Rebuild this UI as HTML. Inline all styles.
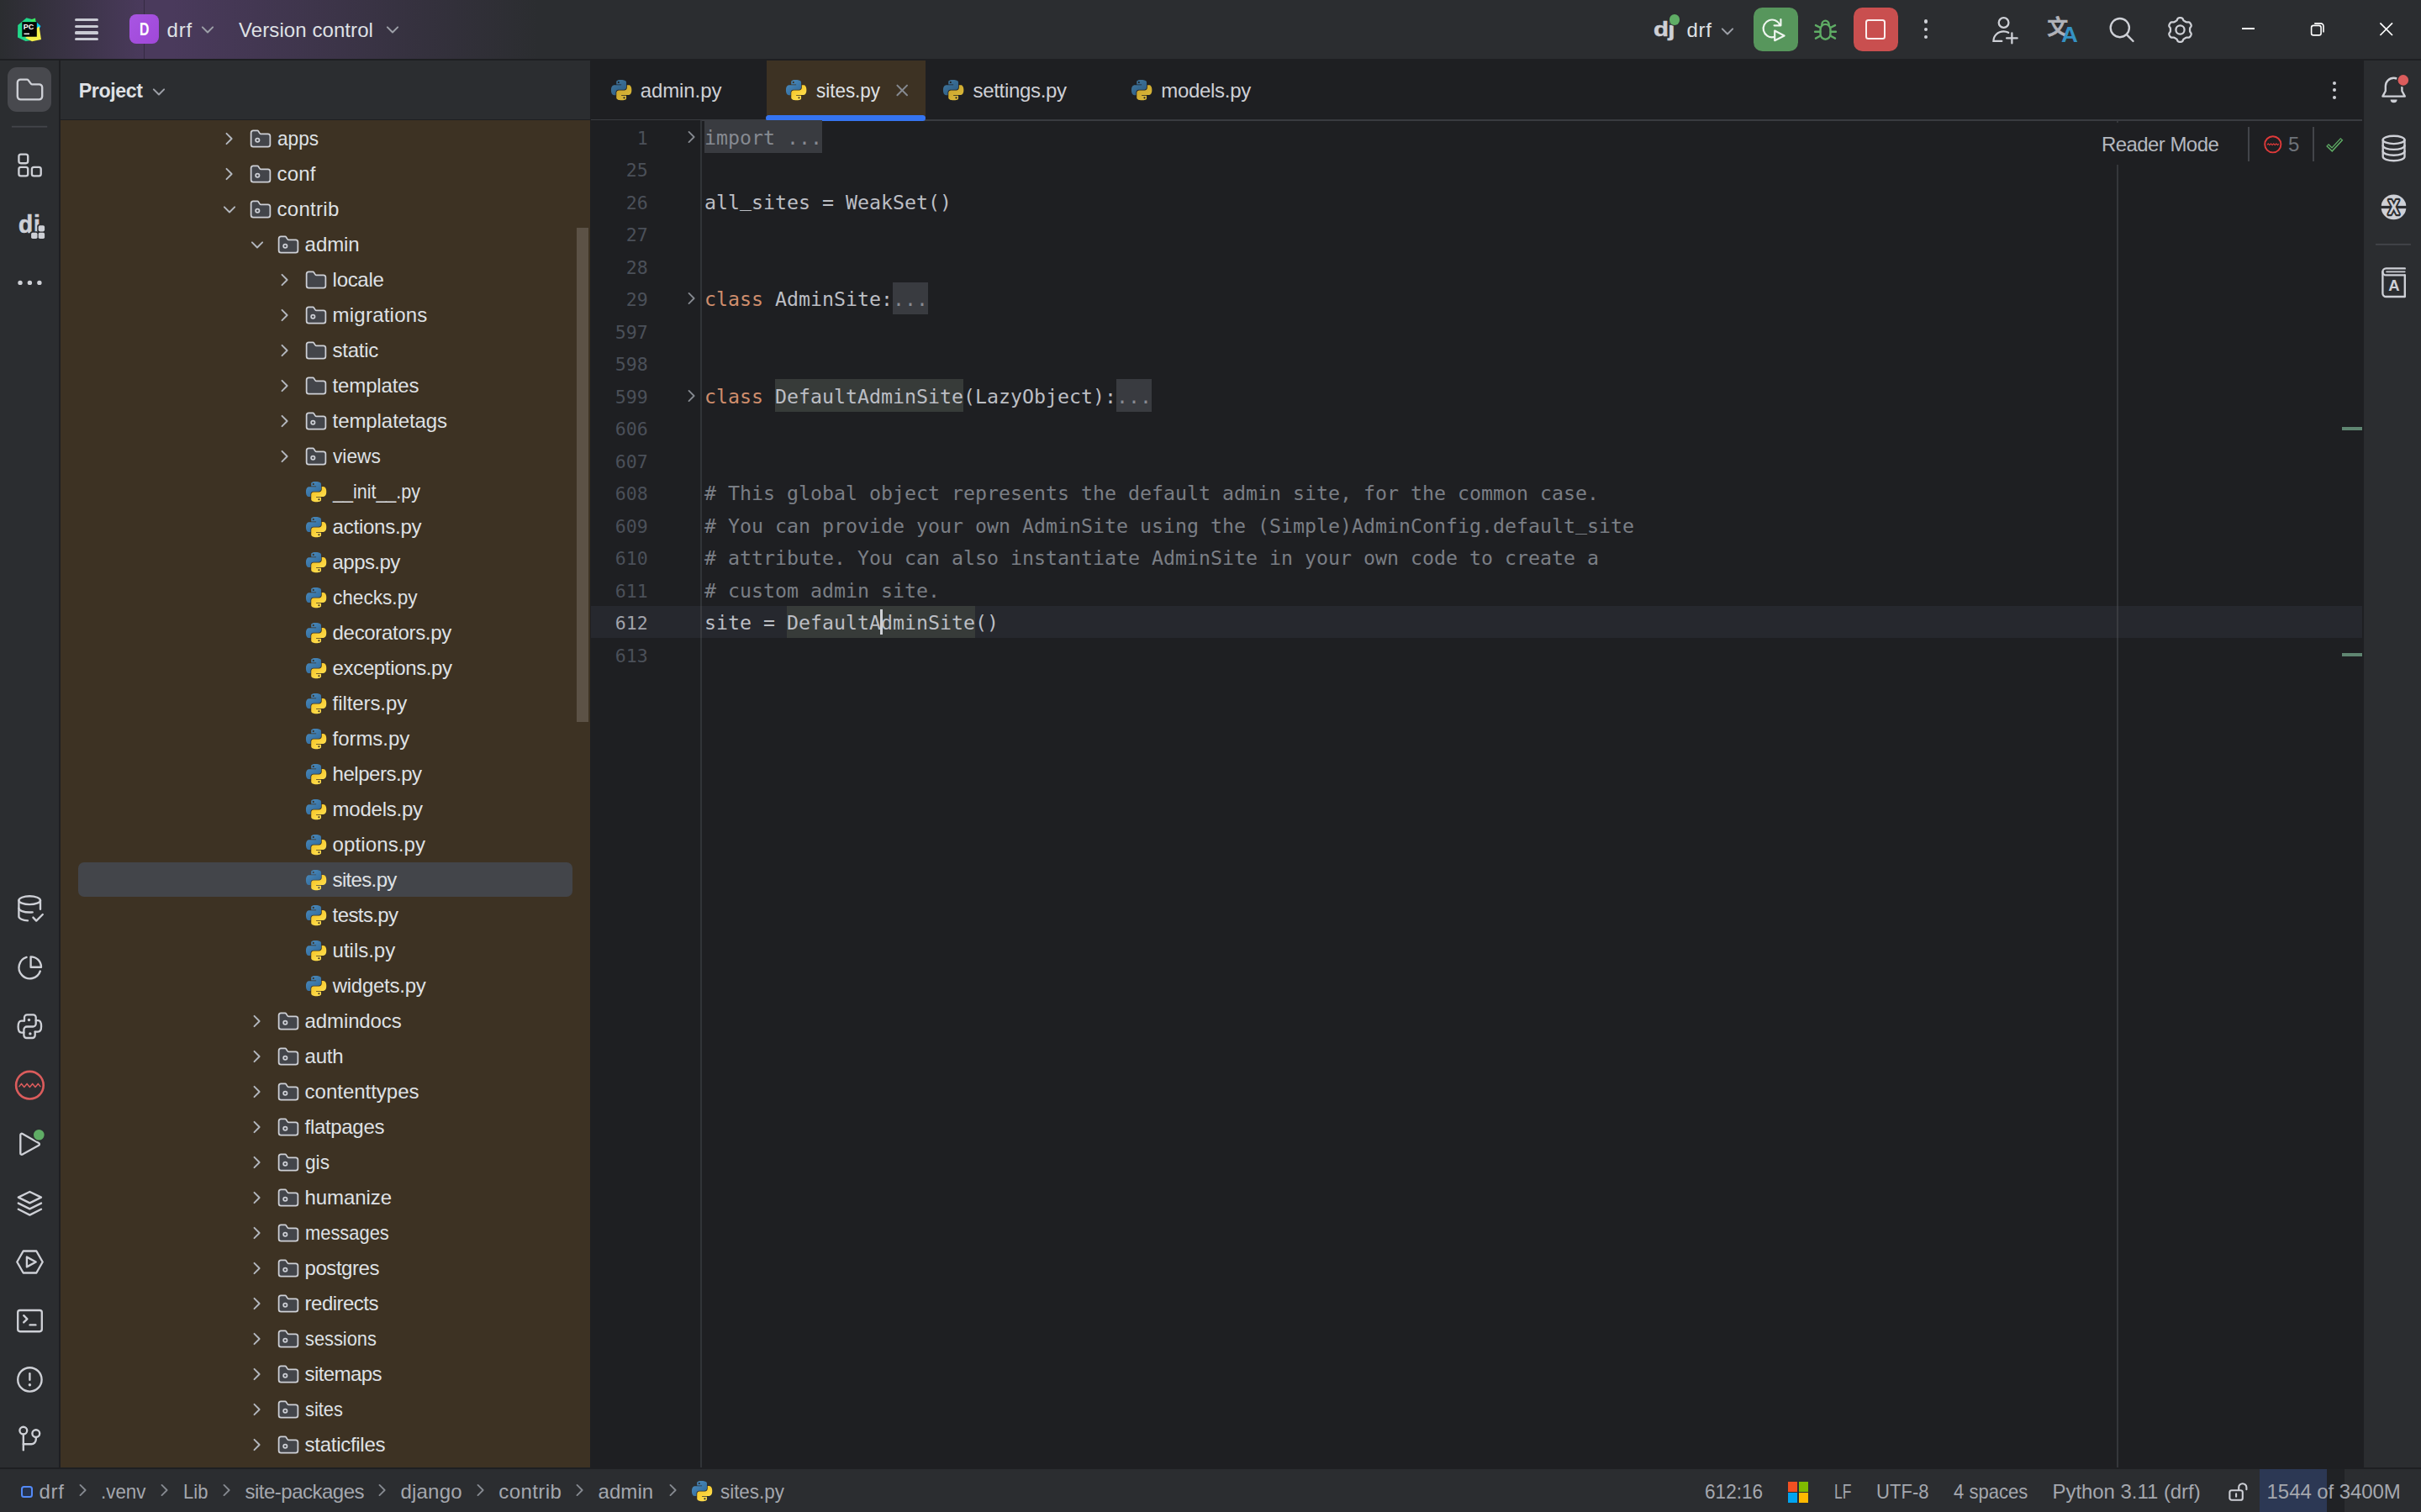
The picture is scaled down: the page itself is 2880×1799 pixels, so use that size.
<!DOCTYPE html>
<html lang="en"><head><meta charset="utf-8"><title>drf – sites.py</title>
<style>
html,body{margin:0;padding:0;background:#1e1f22;}
body{width:2880px;height:1799px;overflow:hidden;position:relative;font-family:"Liberation Sans",sans-serif;}
#r{position:absolute;left:0;top:0;width:2880px;height:1799px;overflow:hidden;}
#r div,#r span,#r svg{position:absolute;}
#r svg{overflow:visible;}
.t{white-space:pre;}
.c{white-space:pre;font-family:"DejaVu Sans Mono","Liberation Mono",monospace;font-size:23.25px;line-height:38px;height:38px;color:#bcbec4;letter-spacing:0.002px;}
.n{white-space:pre;font-family:"DejaVu Sans Mono","Liberation Mono",monospace;font-size:21.6px;line-height:38px;height:38px;color:#4b5059;text-align:right;width:80px;}
</style></head>
<body><div id="r">
<div style="left:0px;top:0px;width:2880px;height:70px;background:#2b2d30;background:linear-gradient(90deg,#2b2d30 0px,#4a3a5c 171px,#4a3a5c 205px,#2b2d30 640px);"></div>
<div style="left:171px;top:0px;width:1px;height:70px;background:rgba(30,25,40,0.45);"></div>
<div style="left:0px;top:72px;width:70px;height:1674px;background:#2b2d30;"></div>
<div style="left:72px;top:72px;width:630px;height:70px;background:#2b2d30;"></div>
<div style="left:72px;top:143px;width:630px;height:1603px;background:#3d3223;"></div>
<div style="left:2812px;top:72px;width:68px;height:1674px;background:#2b2d30;"></div>
<div style="left:0px;top:1748px;width:2880px;height:51px;background:#2b2d30;"></div>
<svg style="left:21px;top:21px;" width="28" height="28" viewBox="0 0 28 28"><polygon points="0.2,9 10.5,0.3 21,3 17,27 9.5,28 0,23.4" fill="#21d789"/><polygon points="19,2 27.5,10 24,17 18,12" fill="#07c3f2"/><polygon points="9,24 17,28.3 28,26 25.5,10 18,17" fill="#f5f04a"/><polygon points="14,3 21,0.5 22,8" fill="#3bea62"/><rect x="5.3" y="5.1" width="17.5" height="17.6" fill="#050505"/><rect x="7.5" y="18.6" width="6.5" height="1.4" fill="#fff"/><text x="6.8" y="14.3" font-family="Liberation Sans,sans-serif" font-weight="700" font-size="9" fill="#fff">PC</text></svg>
<div style="left:89.2px;top:21.55px;width:27.9px;height:3.1px;background:#c9cad3;border-radius:1.5px;"></div>
<div style="left:89.2px;top:29.5px;width:27.9px;height:3.1px;background:#c9cad3;border-radius:1.5px;"></div>
<div style="left:89.2px;top:37.45px;width:27.9px;height:3.1px;background:#c9cad3;border-radius:1.5px;"></div>
<div style="left:89.2px;top:45.400000000000006px;width:27.9px;height:3.1px;background:#c9cad3;border-radius:1.5px;"></div>
<div style="left:154px;top:17px;width:35px;height:35px;background:#a550e0;border-radius:8px;background:linear-gradient(135deg,#a855e3,#a048d8);"></div>
<span class="t" style="left:166.00px;top:23.67px;font-size:22.6px;line-height:22.6px;color:#ffffff;font-weight:700;transform:scaleX(0.70);transform-origin:0 0;">D</span>
<span class="t" style="left:198.60px;top:23.58px;font-size:24px;line-height:24px;color:#dfe1e5;letter-spacing:0.800px;">drf</span>
<svg style="left:232.9px;top:21.3px;" width="28" height="28" viewBox="0 0 16 16"><path d="M4.5 6.5L8 10L11.5 6.5" fill="none" stroke="#9da0a8" stroke-width="1.15" stroke-linecap="round" stroke-linejoin="round"/></svg>
<span class="t" style="left:284.10px;top:23.58px;font-size:24px;line-height:24px;color:#dfe1e5;letter-spacing:0.075px;">Version control</span>
<svg style="left:453.1px;top:21.3px;" width="28" height="28" viewBox="0 0 16 16"><path d="M4.5 6.5L8 10L11.5 6.5" fill="none" stroke="#9da0a8" stroke-width="1.15" stroke-linecap="round" stroke-linejoin="round"/></svg>
<span class="t" style="left:1966.6px;top:23.1px;font-size:24.6px;line-height:24.6px;font-weight:700;color:#ced0d6;letter-spacing:-0.6px;-webkit-text-stroke:0.5px #ced0d6;transform:scaleX(1.2);transform-origin:0 0;">dj</span>
<div style="left:1984.5px;top:15.7px;width:15.6px;height:15.6px;background:#2b2d30;border-radius:50%;"></div>
<div style="left:1986.1px;top:17.3px;width:12.4px;height:12.4px;background:#5fad65;border-radius:50%;"></div>
<span class="t" style="left:2006.60px;top:23.58px;font-size:24px;line-height:24px;color:#dfe1e5;letter-spacing:0.600px;">drf</span>
<svg style="left:2040.7px;top:23px;" width="28" height="28" viewBox="0 0 16 16"><path d="M4.5 6.5L8 10L11.5 6.5" fill="none" stroke="#9da0a8" stroke-width="1.15" stroke-linecap="round" stroke-linejoin="round"/></svg>
<div style="left:2086px;top:8.6px;width:52.5px;height:52.5px;background:#57965c;border-radius:10.5px;"></div>
<svg style="left:0;top:0" width="2880" height="72" viewBox="0 0 2880 72"><g fill="none" stroke="#fff" stroke-opacity="0.9" stroke-width="2.2" stroke-linecap="round" stroke-linejoin="round"><path d="M2117.3 29.2A10.4 10.4 0 1 0 2109.6 44.2"/><path d="M2118.4 23.0V30.3H2110.6"/><path d="M2111.2 36.6V48.2L2122.6 42.4Z" fill="#57965c"/></g></svg>
<svg style="left:2154px;top:17.5px;" width="35" height="35" viewBox="0 0 20 20"><g fill="none" stroke="#5fad65" stroke-width="1.35" stroke-linecap="round"><rect x="6.6" y="6.2" width="6.8" height="10.2" rx="3.4"/><path d="M7.6 6.4a2.4 2.6 0 0 1 4.8 0"/><path d="M6.4 11.3H2.9M17.1 11.3H13.6M6.7 8.6L3.4 6.9M13.3 8.6L16.6 6.9M6.7 14L3.4 15.8M13.3 14L16.6 15.8"/></g></svg>
<div style="left:2205.2px;top:8.6px;width:52.5px;height:52.5px;background:#c94f4f;border-radius:10.5px;"></div>
<div style="left:2219.3px;top:23.1px;width:23.8px;height:23.8px;background:transparent;box-sizing:border-box;border:2.2px solid rgba(255,255,255,0.9);border-radius:3.5px;"></div>
<div style="left:2288.8px;top:23.400000000000002px;width:4.4px;height:4.4px;background:#ced0d6;border-radius:50%;"></div>
<div style="left:2288.8px;top:32.8px;width:4.4px;height:4.4px;background:#ced0d6;border-radius:50%;"></div>
<div style="left:2288.8px;top:42.099999999999994px;width:4.4px;height:4.4px;background:#ced0d6;border-radius:50%;"></div>
<svg style="left:2368px;top:17.5px;" width="35" height="35" viewBox="0 0 20 20"><g fill="none" stroke="#ced0d6" stroke-width="1.3" stroke-linecap="round"><circle cx="8.9" cy="5.15" r="3.35"/><path d="M7.6 17.7H1.95C1.95 13.9 4.9 11.1 8.9 11.1C10.1 11.1 11.2 11.4 12.1 11.9"/><path d="M14.5 12.2V19.1M10.9 15.7H18.1"/></g></svg>
<span class="t" style="left:2435.2px;top:19.8px;font-size:25px;line-height:25px;font-weight:700;color:#b0b2b8;-webkit-text-stroke:0.35px #b0b2b8;font-family:'Liberation Sans','Noto Sans CJK SC',sans-serif;">文</span>
<span class="t" style="left:2452.3px;top:28.9px;font-size:25.5px;line-height:25.5px;font-weight:700;color:#3592c4;transform:scaleX(1.08);transform-origin:0 0;">A</span>
<svg style="left:2505.2px;top:17.0px;" width="35" height="35" viewBox="0 0 20 20"><g fill="none" stroke="#ced0d6" stroke-width="1.35" stroke-linecap="round"><circle cx="9.6" cy="9.2" r="6.35"/><path d="M14.3 13.9L18.6 18.3"/></g></svg>
<svg style="left:2576.1px;top:17.6px;" width="35" height="35" viewBox="0 0 20 20"><path d="M16.60 10.00 L16.60 10.23 L16.60 10.46 L16.60 10.69 L16.61 10.93 L16.67 11.18 L16.79 11.44 L17.01 11.75 L17.28 12.09 L17.47 12.43 L17.55 12.75 L17.53 13.04 L17.46 13.32 L17.36 13.59 L17.24 13.85 L17.10 14.10 L16.95 14.34 L16.79 14.58 L16.61 14.80 L16.40 15.00 L16.15 15.16 L15.84 15.26 L15.45 15.26 L15.02 15.20 L14.65 15.16 L14.35 15.18 L14.11 15.26 L13.90 15.37 L13.70 15.48 L13.50 15.60 L13.30 15.72 L13.10 15.83 L12.90 15.94 L12.70 16.06 L12.50 16.19 L12.31 16.36 L12.15 16.60 L11.99 16.95 L11.83 17.35 L11.63 17.68 L11.39 17.91 L11.13 18.04 L10.85 18.12 L10.57 18.17 L10.29 18.19 L10.00 18.20 L9.71 18.19 L9.43 18.17 L9.15 18.12 L8.87 18.04 L8.61 17.91 L8.37 17.68 L8.17 17.35 L8.01 16.95 L7.85 16.60 L7.69 16.36 L7.50 16.19 L7.30 16.06 L7.10 15.94 L6.90 15.83 L6.70 15.72 L6.50 15.60 L6.30 15.48 L6.10 15.37 L5.89 15.26 L5.65 15.18 L5.35 15.16 L4.98 15.20 L4.55 15.26 L4.16 15.26 L3.85 15.16 L3.60 15.00 L3.39 14.80 L3.21 14.58 L3.05 14.34 L2.90 14.10 L2.76 13.85 L2.64 13.59 L2.54 13.32 L2.47 13.04 L2.45 12.75 L2.53 12.43 L2.72 12.09 L2.99 11.75 L3.21 11.44 L3.33 11.18 L3.39 10.93 L3.40 10.69 L3.40 10.46 L3.40 10.23 L3.40 10.00 L3.40 9.77 L3.40 9.54 L3.40 9.31 L3.39 9.07 L3.33 8.82 L3.21 8.56 L2.99 8.25 L2.72 7.91 L2.53 7.57 L2.45 7.25 L2.47 6.96 L2.54 6.68 L2.64 6.41 L2.76 6.15 L2.90 5.90 L3.05 5.66 L3.21 5.42 L3.39 5.20 L3.60 5.00 L3.85 4.84 L4.16 4.74 L4.55 4.74 L4.98 4.80 L5.35 4.84 L5.65 4.82 L5.89 4.74 L6.10 4.63 L6.30 4.52 L6.50 4.40 L6.70 4.28 L6.90 4.17 L7.10 4.06 L7.30 3.94 L7.50 3.81 L7.69 3.64 L7.85 3.40 L8.01 3.05 L8.17 2.65 L8.37 2.32 L8.61 2.09 L8.87 1.96 L9.15 1.88 L9.43 1.83 L9.71 1.81 L10.00 1.80 L10.29 1.81 L10.57 1.83 L10.85 1.88 L11.13 1.96 L11.39 2.09 L11.63 2.32 L11.83 2.65 L11.99 3.05 L12.15 3.40 L12.31 3.64 L12.50 3.81 L12.70 3.94 L12.90 4.06 L13.10 4.17 L13.30 4.28 L13.50 4.40 L13.70 4.52 L13.90 4.63 L14.11 4.74 L14.35 4.82 L14.65 4.84 L15.02 4.80 L15.45 4.74 L15.84 4.74 L16.15 4.84 L16.40 5.00 L16.61 5.20 L16.79 5.42 L16.95 5.66 L17.10 5.90 L17.24 6.15 L17.36 6.41 L17.46 6.68 L17.53 6.96 L17.55 7.25 L17.47 7.57 L17.28 7.91 L17.01 8.25 L16.79 8.56 L16.67 8.82 L16.61 9.07 L16.60 9.31 L16.60 9.54 L16.60 9.77Z" fill="none" stroke="#ced0d6" stroke-width="1.3" stroke-linejoin="round"/><circle cx="10" cy="10" r="2.9" fill="none" stroke="#ced0d6" stroke-width="1.3"/></svg>
<div style="left:2667.3px;top:33.0px;width:15px;height:1.7px;background:#ffffff;"></div>
<svg style="left:2748px;top:26px;" width="18" height="18" viewBox="0 0 18 18"><g fill="none" stroke="#fff" stroke-width="1.6"><rect x="1.6" y="4.4" width="11.5" height="11.5" rx="2.4"/><path d="M5.2 1.9H12.6A3.4 3.4 0 0 1 16 5.3V12.6"/></g></svg>
<svg style="left:2830px;top:26px;" width="18" height="18" viewBox="0 0 18 18"><path d="M1.4 1.4L16 16M16 1.4L1.4 16" fill="none" stroke="#fff" stroke-width="1.7"/></svg>
<div style="left:9px;top:80.3px;width:52.4px;height:52.6px;background:#48494e;border-radius:11px;"></div>
<svg style="left:0;top:0" width="2880" height="1799" viewBox="0 0 2880 1799"><path fill="none" stroke="#ced0d6" stroke-width="2.35" stroke-linecap="round" stroke-linejoin="round" d="M20.8 98.2a3.6 3.6 0 0 1 3.6 -3.6h7.6a2 2 0 0 1 1.6 .8l3.2 4.2a2 2 0 0 0 1.6 .8h8.2a3.6 3.6 0 0 1 3.6 3.6v10.8a3.6 3.6 0 0 1 -3.6 3.6h-22.2a3.6 3.6 0 0 1 -3.6 -3.6z"/><rect x="13.9" y="149.8" width="42.3" height="1.8" fill="#43454a"/><rect fill="none" stroke="#ced0d6" stroke-width="2.35" stroke-linecap="round" stroke-linejoin="round" x="22.4" y="183.6" width="10.8" height="10.6" rx="2.4"/><rect fill="none" stroke="#ced0d6" stroke-width="2.35" stroke-linecap="round" stroke-linejoin="round" x="22.4" y="198.8" width="10.8" height="10.6" rx="2.4"/><rect fill="none" stroke="#ced0d6" stroke-width="2.35" stroke-linecap="round" stroke-linejoin="round" x="37.9" y="198.8" width="10.8" height="10.6" rx="2.4"/><rect x="45.7" y="268.2" width="7.4" height="7.2" rx="1.8" fill="#ced0d6"/><rect x="37.1" y="276.8" width="7.4" height="7.2" rx="1.8" fill="#ced0d6"/><rect x="45.7" y="276.8" width="7.4" height="7.2" rx="1.8" fill="#ced0d6"/><circle cx="24" cy="336.4" r="2.7" fill="#ced0d6"/><circle cx="35.4" cy="336.4" r="2.7" fill="#ced0d6"/><circle cx="46.9" cy="336.4" r="2.7" fill="#ced0d6"/><g fill="none" stroke="#ced0d6" stroke-width="2.35" stroke-linecap="round" stroke-linejoin="round"><ellipse cx="35.2" cy="1071.2" rx="12.8" ry="4.9"/><path d="M22.4 1071.2v19.4c0 2.4 4.6 4.4 10.6 4.8"/><path d="M48 1071.2v10.6"/><path d="M22.4 1080.6c0 2.7 5.7 4.9 12.8 4.9 1.2 0 2.4 -.06 3.5 -.18"/><path d="M39.4 1091.6l3.8 4.0 7.6 -7.6"/></g><g fill="none" stroke="#ced0d6" stroke-width="2.35" stroke-linecap="round" stroke-linejoin="round"><path d="M31.6 1138.9a13 13 0 1 0 16.2 16.6"/><path d="M36.6 1138.3a12.4 12.4 0 0 1 12.4 12.4h-12.4z"/></g><g fill="none" stroke="#ced0d6" stroke-width="2.3" stroke-linecap="round" stroke-linejoin="round"><path d="M29 1214.6V1210.6a3.2 3.2 0 0 1 3.2 -3.2H39.5a3.2 3.2 0 0 1 3.2 3.2V1218a3.5 3.5 0 0 1 -3.5 3.5H32a3.6 3.6 0 0 0 -3.6 3.6V1231.8a3.2 3.2 0 0 0 3.2 3.2H38.5a3.2 3.2 0 0 0 3.2 -3.2V1227.6"/><path d="M29 1214.6H25.6C22.8 1214.6 21.6 1217.8 21.6 1221.5C21.6 1225.2 22.8 1228.6 25.6 1228.6H28.3"/><path d="M41.7 1227.6H45.1C47.9 1227.6 49.1 1225 49.1 1221.3C49.1 1217.6 47.9 1214.2 45.1 1214.2H42.7"/></g><circle cx="34.5" cy="1213.5" r="1.7" fill="#ced0d6"/><circle cx="35.9" cy="1229.9" r="1.7" fill="#ced0d6"/><circle cx="35.4" cy="1291.2" r="16.3" fill="none" stroke="#db5c5c" stroke-width="2.6"/><path d="M22.9 1292.6l2.6 -3.2 3.3 4 3.3 -4 3.3 4 3.3 -4 3.3 4 3.3 -4 2.6 3.2" fill="none" stroke="#db5c5c" stroke-width="1.5" stroke-linejoin="round" stroke-linecap="round"/><path fill="none" stroke="#ced0d6" stroke-width="2.35" stroke-linecap="round" stroke-linejoin="round" d="M24.3 1350.4a1.6 1.6 0 0 1 2.4 -1.4l19.4 10.9a1.6 1.6 0 0 1 0 2.8l-19.4 10.9a1.6 1.6 0 0 1 -2.4 -1.4z"/><circle cx="46.3" cy="1350.2" r="7.9" fill="#2b2d30"/><circle cx="46.3" cy="1350.2" r="6.3" fill="#5fad65"/><g fill="none" stroke="#ced0d6" stroke-width="2.35" stroke-linecap="round" stroke-linejoin="round"><path d="M35.4 1418l13.6 6.6 -13.6 6.8 -13.6 -6.8z"/><path d="M21.8 1431.6l13.6 6.8 13.6 -6.8"/><path d="M21.8 1438.8l13.6 6.8 13.6 -6.8"/></g><g fill="none" stroke="#ced0d6" stroke-width="2.35" stroke-linecap="round" stroke-linejoin="round"><path d="M20.3 1501.5l7.4 -13h15.6l7.4 13 -7.4 13h-15.6z"/><path d="M31.9 1495.6v11.8l10.8 -5.9z"/></g><g fill="none" stroke="#ced0d6" stroke-width="2.35" stroke-linecap="round" stroke-linejoin="round"><rect x="21.2" y="1559" width="28.6" height="25.2" rx="2.6"/><path d="M28.2 1565.2l4.2 4.1 -4.2 4.1"/><path d="M35.6 1576.4h6.8"/></g><g fill="none" stroke="#ced0d6" stroke-width="2.35" stroke-linecap="round" stroke-linejoin="round"><circle cx="35.4" cy="1641.4" r="14.2"/><path d="M35.4 1634.2v7.6"/></g><circle cx="35.4" cy="1647.8" r="1.7" fill="#ced0d6"/><g fill="none" stroke="#ced0d6" stroke-width="2.35" stroke-linecap="round" stroke-linejoin="round"><circle cx="27.8" cy="1702.1" r="4.4"/><circle cx="42.8" cy="1705.6" r="4.4"/><path d="M27.8 1706.6v18.6"/><path d="M42.8 1710.2v2.4a5.6 5.6 0 0 1 -5.6 5.6h-9.4"/></g></svg>
<span class="t" style="left:21.8px;top:251.6px;font-size:29.5px;line-height:29.5px;font-weight:700;color:#ced0d6;letter-spacing:1px;-webkit-text-stroke:0.7px #ced0d6;transform:scaleX(0.95);transform-origin:0 0;">dj</span>
<svg style="left:0;top:0" width="72" height="400" viewBox="0 0 72 400"><rect x="44.2" y="266.7" width="10.4" height="10.2" rx="2.6" fill="#2b2d30"/><rect x="35.6" y="275.3" width="10.4" height="10.2" rx="2.6" fill="#2b2d30"/><rect x="44.2" y="275.3" width="10.4" height="10.2" rx="2.6" fill="#2b2d30"/><rect x="45.7" y="268.2" width="7.4" height="7.2" rx="1.8" fill="#ced0d6"/><rect x="37.1" y="276.8" width="7.4" height="7.2" rx="1.8" fill="#ced0d6"/><rect x="45.7" y="276.8" width="7.4" height="7.2" rx="1.8" fill="#ced0d6"/></svg>
<span class="t" style="left:93.80px;top:96.56px;font-size:23.2px;line-height:23.2px;color:#dfe1e5;letter-spacing:-0.408px;font-weight:700;">Project</span>
<svg style="left:175px;top:95px;" width="28" height="28" viewBox="0 0 16 16"><path d="M4.5 6.5L8 10L11.5 6.5" fill="none" stroke="#9da0a8" stroke-width="1.15" stroke-linecap="round" stroke-linejoin="round"/></svg>
<div style="left:93px;top:1026px;width:588px;height:41px;background:#43454a;border-radius:7px;"></div>
<div style="left:686px;top:271px;width:14px;height:588px;background:rgba(255,255,255,0.16);"></div>
<svg style="left:259px;top:151px;" width="28" height="28" viewBox="0 0 16 16"><path d="M6 4.5L9.5 8L6 11.5" fill="none" stroke="#b4b8bf" stroke-width="1.1" stroke-linecap="round" stroke-linejoin="round"/></svg>
<svg style="left:296px;top:151px;" width="28" height="28" viewBox="0 0 16 16"><path d="M1.5 4C1.5 3.17 2.17 2.5 3 2.5H5.93C6.1 2.5 6.25 2.58 6.35 2.72L7.44 4.36C7.62 4.64 7.94 4.81 8.27 4.81H13C13.83 4.81 14.5 5.48 14.5 6.31V12C14.5 12.83 13.83 13.5 13 13.5H3C2.17 13.5 1.5 12.83 1.5 12V4Z" fill="#43454a" stroke="#ced0d6" stroke-width="1"/><circle cx="5.9" cy="9.0" r="1.25" fill="none" stroke="#ced0d6" stroke-width="1"/></svg>
<span class="t" style="left:329.60px;top:152.88px;font-size:24px;line-height:24px;color:#dfe1e5;transform:scaleX(0.9414);transform-origin:0 0;">apps</span>
<svg style="left:259px;top:193px;" width="28" height="28" viewBox="0 0 16 16"><path d="M6 4.5L9.5 8L6 11.5" fill="none" stroke="#b4b8bf" stroke-width="1.1" stroke-linecap="round" stroke-linejoin="round"/></svg>
<svg style="left:296px;top:193px;" width="28" height="28" viewBox="0 0 16 16"><path d="M1.5 4C1.5 3.17 2.17 2.5 3 2.5H5.93C6.1 2.5 6.25 2.58 6.35 2.72L7.44 4.36C7.62 4.64 7.94 4.81 8.27 4.81H13C13.83 4.81 14.5 5.48 14.5 6.31V12C14.5 12.83 13.83 13.5 13 13.5H3C2.17 13.5 1.5 12.83 1.5 12V4Z" fill="#43454a" stroke="#ced0d6" stroke-width="1"/><circle cx="5.9" cy="9.0" r="1.25" fill="none" stroke="#ced0d6" stroke-width="1"/></svg>
<span class="t" style="left:329.60px;top:194.88px;font-size:24px;line-height:24px;color:#dfe1e5;letter-spacing:0.183px;">conf</span>
<svg style="left:259px;top:235px;" width="28" height="28" viewBox="0 0 16 16"><path d="M4.5 6.5L8 10L11.5 6.5" fill="none" stroke="#b4b8bf" stroke-width="1.1" stroke-linecap="round" stroke-linejoin="round"/></svg>
<svg style="left:296px;top:235px;" width="28" height="28" viewBox="0 0 16 16"><path d="M1.5 4C1.5 3.17 2.17 2.5 3 2.5H5.93C6.1 2.5 6.25 2.58 6.35 2.72L7.44 4.36C7.62 4.64 7.94 4.81 8.27 4.81H13C13.83 4.81 14.5 5.48 14.5 6.31V12C14.5 12.83 13.83 13.5 13 13.5H3C2.17 13.5 1.5 12.83 1.5 12V4Z" fill="#43454a" stroke="#ced0d6" stroke-width="1"/><circle cx="5.9" cy="9.0" r="1.25" fill="none" stroke="#ced0d6" stroke-width="1"/></svg>
<span class="t" style="left:329.60px;top:236.88px;font-size:24px;line-height:24px;color:#dfe1e5;letter-spacing:0.275px;">contrib</span>
<svg style="left:292px;top:277px;" width="28" height="28" viewBox="0 0 16 16"><path d="M4.5 6.5L8 10L11.5 6.5" fill="none" stroke="#b4b8bf" stroke-width="1.1" stroke-linecap="round" stroke-linejoin="round"/></svg>
<svg style="left:329px;top:277px;" width="28" height="28" viewBox="0 0 16 16"><path d="M1.5 4C1.5 3.17 2.17 2.5 3 2.5H5.93C6.1 2.5 6.25 2.58 6.35 2.72L7.44 4.36C7.62 4.64 7.94 4.81 8.27 4.81H13C13.83 4.81 14.5 5.48 14.5 6.31V12C14.5 12.83 13.83 13.5 13 13.5H3C2.17 13.5 1.5 12.83 1.5 12V4Z" fill="#43454a" stroke="#ced0d6" stroke-width="1"/><circle cx="5.9" cy="9.0" r="1.25" fill="none" stroke="#ced0d6" stroke-width="1"/></svg>
<span class="t" style="left:362.60px;top:278.88px;font-size:24px;line-height:24px;color:#dfe1e5;letter-spacing:-0.063px;">admin</span>
<svg style="left:325px;top:319px;" width="28" height="28" viewBox="0 0 16 16"><path d="M6 4.5L9.5 8L6 11.5" fill="none" stroke="#b4b8bf" stroke-width="1.1" stroke-linecap="round" stroke-linejoin="round"/></svg>
<svg style="left:362px;top:319px;" width="28" height="28" viewBox="0 0 16 16"><path d="M1.5 4C1.5 3.17 2.17 2.5 3 2.5H5.93C6.1 2.5 6.25 2.58 6.35 2.72L7.44 4.36C7.62 4.64 7.94 4.81 8.27 4.81H13C13.83 4.81 14.5 5.48 14.5 6.31V12C14.5 12.83 13.83 13.5 13 13.5H3C2.17 13.5 1.5 12.83 1.5 12V4Z" fill="#43454a" stroke="#ced0d6" stroke-width="1"/></svg>
<span class="t" style="left:395.60px;top:320.88px;font-size:24px;line-height:24px;color:#dfe1e5;letter-spacing:-0.300px;">locale</span>
<svg style="left:325px;top:361px;" width="28" height="28" viewBox="0 0 16 16"><path d="M6 4.5L9.5 8L6 11.5" fill="none" stroke="#b4b8bf" stroke-width="1.1" stroke-linecap="round" stroke-linejoin="round"/></svg>
<svg style="left:362px;top:361px;" width="28" height="28" viewBox="0 0 16 16"><path d="M1.5 4C1.5 3.17 2.17 2.5 3 2.5H5.93C6.1 2.5 6.25 2.58 6.35 2.72L7.44 4.36C7.62 4.64 7.94 4.81 8.27 4.81H13C13.83 4.81 14.5 5.48 14.5 6.31V12C14.5 12.83 13.83 13.5 13 13.5H3C2.17 13.5 1.5 12.83 1.5 12V4Z" fill="#43454a" stroke="#ced0d6" stroke-width="1"/><circle cx="5.9" cy="9.0" r="1.25" fill="none" stroke="#ced0d6" stroke-width="1"/></svg>
<span class="t" style="left:395.60px;top:362.88px;font-size:24px;line-height:24px;color:#dfe1e5;letter-spacing:0.222px;">migrations</span>
<svg style="left:325px;top:403px;" width="28" height="28" viewBox="0 0 16 16"><path d="M6 4.5L9.5 8L6 11.5" fill="none" stroke="#b4b8bf" stroke-width="1.1" stroke-linecap="round" stroke-linejoin="round"/></svg>
<svg style="left:362px;top:403px;" width="28" height="28" viewBox="0 0 16 16"><path d="M1.5 4C1.5 3.17 2.17 2.5 3 2.5H5.93C6.1 2.5 6.25 2.58 6.35 2.72L7.44 4.36C7.62 4.64 7.94 4.81 8.27 4.81H13C13.83 4.81 14.5 5.48 14.5 6.31V12C14.5 12.83 13.83 13.5 13 13.5H3C2.17 13.5 1.5 12.83 1.5 12V4Z" fill="#43454a" stroke="#ced0d6" stroke-width="1"/></svg>
<span class="t" style="left:395.60px;top:404.88px;font-size:24px;line-height:24px;color:#dfe1e5;letter-spacing:-0.260px;">static</span>
<svg style="left:325px;top:445px;" width="28" height="28" viewBox="0 0 16 16"><path d="M6 4.5L9.5 8L6 11.5" fill="none" stroke="#b4b8bf" stroke-width="1.1" stroke-linecap="round" stroke-linejoin="round"/></svg>
<svg style="left:362px;top:445px;" width="28" height="28" viewBox="0 0 16 16"><path d="M1.5 4C1.5 3.17 2.17 2.5 3 2.5H5.93C6.1 2.5 6.25 2.58 6.35 2.72L7.44 4.36C7.62 4.64 7.94 4.81 8.27 4.81H13C13.83 4.81 14.5 5.48 14.5 6.31V12C14.5 12.83 13.83 13.5 13 13.5H3C2.17 13.5 1.5 12.83 1.5 12V4Z" fill="#43454a" stroke="#ced0d6" stroke-width="1"/></svg>
<span class="t" style="left:395.60px;top:446.88px;font-size:24px;line-height:24px;color:#dfe1e5;letter-spacing:-0.144px;">templates</span>
<svg style="left:325px;top:487px;" width="28" height="28" viewBox="0 0 16 16"><path d="M6 4.5L9.5 8L6 11.5" fill="none" stroke="#b4b8bf" stroke-width="1.1" stroke-linecap="round" stroke-linejoin="round"/></svg>
<svg style="left:362px;top:487px;" width="28" height="28" viewBox="0 0 16 16"><path d="M1.5 4C1.5 3.17 2.17 2.5 3 2.5H5.93C6.1 2.5 6.25 2.58 6.35 2.72L7.44 4.36C7.62 4.64 7.94 4.81 8.27 4.81H13C13.83 4.81 14.5 5.48 14.5 6.31V12C14.5 12.83 13.83 13.5 13 13.5H3C2.17 13.5 1.5 12.83 1.5 12V4Z" fill="#43454a" stroke="#ced0d6" stroke-width="1"/><circle cx="5.9" cy="9.0" r="1.25" fill="none" stroke="#ced0d6" stroke-width="1"/></svg>
<span class="t" style="left:395.60px;top:488.88px;font-size:24px;line-height:24px;color:#dfe1e5;letter-spacing:-0.082px;">templatetags</span>
<svg style="left:325px;top:529px;" width="28" height="28" viewBox="0 0 16 16"><path d="M6 4.5L9.5 8L6 11.5" fill="none" stroke="#b4b8bf" stroke-width="1.1" stroke-linecap="round" stroke-linejoin="round"/></svg>
<svg style="left:362px;top:529px;" width="28" height="28" viewBox="0 0 16 16"><path d="M1.5 4C1.5 3.17 2.17 2.5 3 2.5H5.93C6.1 2.5 6.25 2.58 6.35 2.72L7.44 4.36C7.62 4.64 7.94 4.81 8.27 4.81H13C13.83 4.81 14.5 5.48 14.5 6.31V12C14.5 12.83 13.83 13.5 13 13.5H3C2.17 13.5 1.5 12.83 1.5 12V4Z" fill="#43454a" stroke="#ced0d6" stroke-width="1"/><circle cx="5.9" cy="9.0" r="1.25" fill="none" stroke="#ced0d6" stroke-width="1"/></svg>
<span class="t" style="left:395.60px;top:530.88px;font-size:24px;line-height:24px;color:#dfe1e5;transform:scaleX(0.9467);transform-origin:0 0;">views</span>
<svg style="left:363.8px;top:572.9px;" width="24.2" height="24.2" viewBox="0 0 24 24"><linearGradient id="pb1" x1="0.1" y1="0" x2="0.85" y2="1"><stop offset="0" stop-color="#4c8dc0"/><stop offset="1" stop-color="#2f6797"/></linearGradient><linearGradient id="py1" x1="0.8" y1="0.85" x2="0.2" y2="0"><stop offset="0" stop-color="#ffe052"/><stop offset="1" stop-color="#f4c01e"/></linearGradient><path fill="url(#pb1)" d="M14.25.18l.9.2.73.26.59.3.45.32.34.34.25.34.16.33.1.3.04.26.02.2-.01.13V8.5l-.05.63-.13.55-.21.46-.26.38-.3.31-.33.25-.35.19-.35.14-.33.1-.3.07-.26.04-.21.02H8.77l-.69.05-.59.14-.5.22-.41.27-.33.32-.27.35-.2.36-.15.37-.1.35-.07.32-.04.27-.02.21v3.06H3.17l-.21-.03-.28-.07-.32-.12-.35-.18-.36-.26-.36-.36-.35-.46-.32-.59-.28-.73-.21-.88-.14-1.05-.05-1.23.06-1.22.16-1.04.24-.87.32-.71.36-.57.4-.44.42-.33.42-.24.4-.16.36-.1.32-.05.24-.01h.16l.06.01h8.16v-.83H6.18l-.01-2.75-.02-.37.05-.34.11-.31.17-.28.25-.26.31-.23.38-.2.44-.18.51-.15.58-.12.64-.1.71-.06.77-.04.84-.02 1.27.05zm-6.3 1.98l-.23.33-.08.41.08.41.23.34.33.22.41.09.41-.09.33-.22.23-.34.08-.41-.08-.41-.23-.33-.33-.22-.41-.09-.41.09z"/><path fill="url(#py1)" d="M21.04 6.11l.28.06.32.12.35.18.36.27.36.35.35.47.32.59.28.73.21.88.14 1.04.05 1.23-.06 1.23-.16 1.04-.24.86-.32.71-.36.57-.4.45-.42.33-.42.24-.4.16-.36.09-.32.05-.24.02-.16-.01h-8.22v.82h5.84l.01 2.76.02.36-.05.34-.11.31-.17.29-.25.25-.31.24-.38.2-.44.17-.51.15-.58.13-.64.09-.71.07-.77.04-.84.01-1.27-.04-1.07-.14-.9-.2-.73-.25-.59-.3-.45-.33-.34-.34-.25-.34-.16-.33-.1-.3-.04-.25-.02-.2.01-.13v-5.34l.05-.64.13-.54.21-.46.26-.38.3-.32.33-.24.35-.2.35-.14.33-.1.3-.06.26-.04.21-.02.13-.01h5.84l.69-.05.59-.14.5-.21.41-.28.33-.32.27-.35.2-.36.15-.36.1-.35.07-.32.04-.28.02-.21V6.07h2.09l.14.01zm-6.47 14.25l-.23.33-.08.41.08.41.23.33.33.23.41.08.41-.08.33-.23.23-.33.08-.41-.08-.41-.23-.33-.33-.23-.41-.08-.41.08z"/></svg>
<span class="t" style="left:395.96px;top:572.88px;font-size:24px;line-height:24px;color:#dfe1e5;transform:scaleX(0.8961);transform-origin:0 0;">__init__.py</span>
<svg style="left:363.8px;top:614.9px;" width="24.2" height="24.2" viewBox="0 0 24 24"><linearGradient id="pb2" x1="0.1" y1="0" x2="0.85" y2="1"><stop offset="0" stop-color="#4c8dc0"/><stop offset="1" stop-color="#2f6797"/></linearGradient><linearGradient id="py2" x1="0.8" y1="0.85" x2="0.2" y2="0"><stop offset="0" stop-color="#ffe052"/><stop offset="1" stop-color="#f4c01e"/></linearGradient><path fill="url(#pb2)" d="M14.25.18l.9.2.73.26.59.3.45.32.34.34.25.34.16.33.1.3.04.26.02.2-.01.13V8.5l-.05.63-.13.55-.21.46-.26.38-.3.31-.33.25-.35.19-.35.14-.33.1-.3.07-.26.04-.21.02H8.77l-.69.05-.59.14-.5.22-.41.27-.33.32-.27.35-.2.36-.15.37-.1.35-.07.32-.04.27-.02.21v3.06H3.17l-.21-.03-.28-.07-.32-.12-.35-.18-.36-.26-.36-.36-.35-.46-.32-.59-.28-.73-.21-.88-.14-1.05-.05-1.23.06-1.22.16-1.04.24-.87.32-.71.36-.57.4-.44.42-.33.42-.24.4-.16.36-.1.32-.05.24-.01h.16l.06.01h8.16v-.83H6.18l-.01-2.75-.02-.37.05-.34.11-.31.17-.28.25-.26.31-.23.38-.2.44-.18.51-.15.58-.12.64-.1.71-.06.77-.04.84-.02 1.27.05zm-6.3 1.98l-.23.33-.08.41.08.41.23.34.33.22.41.09.41-.09.33-.22.23-.34.08-.41-.08-.41-.23-.33-.33-.22-.41-.09-.41.09z"/><path fill="url(#py2)" d="M21.04 6.11l.28.06.32.12.35.18.36.27.36.35.35.47.32.59.28.73.21.88.14 1.04.05 1.23-.06 1.23-.16 1.04-.24.86-.32.71-.36.57-.4.45-.42.33-.42.24-.4.16-.36.09-.32.05-.24.02-.16-.01h-8.22v.82h5.84l.01 2.76.02.36-.05.34-.11.31-.17.29-.25.25-.31.24-.38.2-.44.17-.51.15-.58.13-.64.09-.71.07-.77.04-.84.01-1.27-.04-1.07-.14-.9-.2-.73-.25-.59-.3-.45-.33-.34-.34-.25-.34-.16-.33-.1-.3-.04-.25-.02-.2.01-.13v-5.34l.05-.64.13-.54.21-.46.26-.38.3-.32.33-.24.35-.2.35-.14.33-.1.3-.06.26-.04.21-.02.13-.01h5.84l.69-.05.59-.14.5-.21.41-.28.33-.32.27-.35.2-.36.15-.36.1-.35.07-.32.04-.28.02-.21V6.07h2.09l.14.01zm-6.47 14.25l-.23.33-.08.41.08.41.23.33.33.23.41.08.41-.08.33-.23.23-.33.08-.41-.08-.41-.23-.33-.33-.23-.41-.08-.41.08z"/></svg>
<span class="t" style="left:395.60px;top:614.88px;font-size:24px;line-height:24px;color:#dfe1e5;letter-spacing:-0.239px;">actions.py</span>
<svg style="left:363.8px;top:656.9px;" width="24.2" height="24.2" viewBox="0 0 24 24"><linearGradient id="pb3" x1="0.1" y1="0" x2="0.85" y2="1"><stop offset="0" stop-color="#4c8dc0"/><stop offset="1" stop-color="#2f6797"/></linearGradient><linearGradient id="py3" x1="0.8" y1="0.85" x2="0.2" y2="0"><stop offset="0" stop-color="#ffe052"/><stop offset="1" stop-color="#f4c01e"/></linearGradient><path fill="url(#pb3)" d="M14.25.18l.9.2.73.26.59.3.45.32.34.34.25.34.16.33.1.3.04.26.02.2-.01.13V8.5l-.05.63-.13.55-.21.46-.26.38-.3.31-.33.25-.35.19-.35.14-.33.1-.3.07-.26.04-.21.02H8.77l-.69.05-.59.14-.5.22-.41.27-.33.32-.27.35-.2.36-.15.37-.1.35-.07.32-.04.27-.02.21v3.06H3.17l-.21-.03-.28-.07-.32-.12-.35-.18-.36-.26-.36-.36-.35-.46-.32-.59-.28-.73-.21-.88-.14-1.05-.05-1.23.06-1.22.16-1.04.24-.87.32-.71.36-.57.4-.44.42-.33.42-.24.4-.16.36-.1.32-.05.24-.01h.16l.06.01h8.16v-.83H6.18l-.01-2.75-.02-.37.05-.34.11-.31.17-.28.25-.26.31-.23.38-.2.44-.18.51-.15.58-.12.64-.1.71-.06.77-.04.84-.02 1.27.05zm-6.3 1.98l-.23.33-.08.41.08.41.23.34.33.22.41.09.41-.09.33-.22.23-.34.08-.41-.08-.41-.23-.33-.33-.22-.41-.09-.41.09z"/><path fill="url(#py3)" d="M21.04 6.11l.28.06.32.12.35.18.36.27.36.35.35.47.32.59.28.73.21.88.14 1.04.05 1.23-.06 1.23-.16 1.04-.24.86-.32.71-.36.57-.4.45-.42.33-.42.24-.4.16-.36.09-.32.05-.24.02-.16-.01h-8.22v.82h5.84l.01 2.76.02.36-.05.34-.11.31-.17.29-.25.25-.31.24-.38.2-.44.17-.51.15-.58.13-.64.09-.71.07-.77.04-.84.01-1.27-.04-1.07-.14-.9-.2-.73-.25-.59-.3-.45-.33-.34-.34-.25-.34-.16-.33-.1-.3-.04-.25-.02-.2.01-.13v-5.34l.05-.64.13-.54.21-.46.26-.38.3-.32.33-.24.35-.2.35-.14.33-.1.3-.06.26-.04.21-.02.13-.01h5.84l.69-.05.59-.14.5-.21.41-.28.33-.32.27-.35.2-.36.15-.36.1-.35.07-.32.04-.28.02-.21V6.07h2.09l.14.01zm-6.47 14.25l-.23.33-.08.41.08.41.23.33.33.23.41.08.41-.08.33-.23.23-.33.08-.41-.08-.41-.23-.33-.33-.23-.41-.08-.41.08z"/></svg>
<span class="t" style="left:395.60px;top:656.88px;font-size:24px;line-height:24px;color:#dfe1e5;letter-spacing:-0.575px;">apps.py</span>
<svg style="left:363.8px;top:698.9px;" width="24.2" height="24.2" viewBox="0 0 24 24"><linearGradient id="pb4" x1="0.1" y1="0" x2="0.85" y2="1"><stop offset="0" stop-color="#4c8dc0"/><stop offset="1" stop-color="#2f6797"/></linearGradient><linearGradient id="py4" x1="0.8" y1="0.85" x2="0.2" y2="0"><stop offset="0" stop-color="#ffe052"/><stop offset="1" stop-color="#f4c01e"/></linearGradient><path fill="url(#pb4)" d="M14.25.18l.9.2.73.26.59.3.45.32.34.34.25.34.16.33.1.3.04.26.02.2-.01.13V8.5l-.05.63-.13.55-.21.46-.26.38-.3.31-.33.25-.35.19-.35.14-.33.1-.3.07-.26.04-.21.02H8.77l-.69.05-.59.14-.5.22-.41.27-.33.32-.27.35-.2.36-.15.37-.1.35-.07.32-.04.27-.02.21v3.06H3.17l-.21-.03-.28-.07-.32-.12-.35-.18-.36-.26-.36-.36-.35-.46-.32-.59-.28-.73-.21-.88-.14-1.05-.05-1.23.06-1.22.16-1.04.24-.87.32-.71.36-.57.4-.44.42-.33.42-.24.4-.16.36-.1.32-.05.24-.01h.16l.06.01h8.16v-.83H6.18l-.01-2.75-.02-.37.05-.34.11-.31.17-.28.25-.26.31-.23.38-.2.44-.18.51-.15.58-.12.64-.1.71-.06.77-.04.84-.02 1.27.05zm-6.3 1.98l-.23.33-.08.41.08.41.23.34.33.22.41.09.41-.09.33-.22.23-.34.08-.41-.08-.41-.23-.33-.33-.22-.41-.09-.41.09z"/><path fill="url(#py4)" d="M21.04 6.11l.28.06.32.12.35.18.36.27.36.35.35.47.32.59.28.73.21.88.14 1.04.05 1.23-.06 1.23-.16 1.04-.24.86-.32.71-.36.57-.4.45-.42.33-.42.24-.4.16-.36.09-.32.05-.24.02-.16-.01h-8.22v.82h5.84l.01 2.76.02.36-.05.34-.11.31-.17.29-.25.25-.31.24-.38.2-.44.17-.51.15-.58.13-.64.09-.71.07-.77.04-.84.01-1.27-.04-1.07-.14-.9-.2-.73-.25-.59-.3-.45-.33-.34-.34-.25-.34-.16-.33-.1-.3-.04-.25-.02-.2.01-.13v-5.34l.05-.64.13-.54.21-.46.26-.38.3-.32.33-.24.35-.2.35-.14.33-.1.3-.06.26-.04.21-.02.13-.01h5.84l.69-.05.59-.14.5-.21.41-.28.33-.32.27-.35.2-.36.15-.36.1-.35.07-.32.04-.28.02-.21V6.07h2.09l.14.01zm-6.47 14.25l-.23.33-.08.41.08.41.23.33.33.23.41.08.41-.08.33-.23.23-.33.08-.41-.08-.41-.23-.33-.33-.23-.41-.08-.41.08z"/></svg>
<span class="t" style="left:395.60px;top:698.88px;font-size:24px;line-height:24px;color:#dfe1e5;transform:scaleX(0.9419);transform-origin:0 0;">checks.py</span>
<svg style="left:363.8px;top:740.9px;" width="24.2" height="24.2" viewBox="0 0 24 24"><linearGradient id="pb5" x1="0.1" y1="0" x2="0.85" y2="1"><stop offset="0" stop-color="#4c8dc0"/><stop offset="1" stop-color="#2f6797"/></linearGradient><linearGradient id="py5" x1="0.8" y1="0.85" x2="0.2" y2="0"><stop offset="0" stop-color="#ffe052"/><stop offset="1" stop-color="#f4c01e"/></linearGradient><path fill="url(#pb5)" d="M14.25.18l.9.2.73.26.59.3.45.32.34.34.25.34.16.33.1.3.04.26.02.2-.01.13V8.5l-.05.63-.13.55-.21.46-.26.38-.3.31-.33.25-.35.19-.35.14-.33.1-.3.07-.26.04-.21.02H8.77l-.69.05-.59.14-.5.22-.41.27-.33.32-.27.35-.2.36-.15.37-.1.35-.07.32-.04.27-.02.21v3.06H3.17l-.21-.03-.28-.07-.32-.12-.35-.18-.36-.26-.36-.36-.35-.46-.32-.59-.28-.73-.21-.88-.14-1.05-.05-1.23.06-1.22.16-1.04.24-.87.32-.71.36-.57.4-.44.42-.33.42-.24.4-.16.36-.1.32-.05.24-.01h.16l.06.01h8.16v-.83H6.18l-.01-2.75-.02-.37.05-.34.11-.31.17-.28.25-.26.31-.23.38-.2.44-.18.51-.15.58-.12.64-.1.71-.06.77-.04.84-.02 1.27.05zm-6.3 1.98l-.23.33-.08.41.08.41.23.34.33.22.41.09.41-.09.33-.22.23-.34.08-.41-.08-.41-.23-.33-.33-.22-.41-.09-.41.09z"/><path fill="url(#py5)" d="M21.04 6.11l.28.06.32.12.35.18.36.27.36.35.35.47.32.59.28.73.21.88.14 1.04.05 1.23-.06 1.23-.16 1.04-.24.86-.32.71-.36.57-.4.45-.42.33-.42.24-.4.16-.36.09-.32.05-.24.02-.16-.01h-8.22v.82h5.84l.01 2.76.02.36-.05.34-.11.31-.17.29-.25.25-.31.24-.38.2-.44.17-.51.15-.58.13-.64.09-.71.07-.77.04-.84.01-1.27-.04-1.07-.14-.9-.2-.73-.25-.59-.3-.45-.33-.34-.34-.25-.34-.16-.33-.1-.3-.04-.25-.02-.2.01-.13v-5.34l.05-.64.13-.54.21-.46.26-.38.3-.32.33-.24.35-.2.35-.14.33-.1.3-.06.26-.04.21-.02.13-.01h5.84l.69-.05.59-.14.5-.21.41-.28.33-.32.27-.35.2-.36.15-.36.1-.35.07-.32.04-.28.02-.21V6.07h2.09l.14.01zm-6.47 14.25l-.23.33-.08.41.08.41.23.33.33.23.41.08.41-.08.33-.23.23-.33.08-.41-.08-.41-.23-.33-.33-.23-.41-.08-.41.08z"/></svg>
<span class="t" style="left:395.60px;top:740.88px;font-size:24px;line-height:24px;color:#dfe1e5;letter-spacing:-0.317px;">decorators.py</span>
<svg style="left:363.8px;top:782.9px;" width="24.2" height="24.2" viewBox="0 0 24 24"><linearGradient id="pb6" x1="0.1" y1="0" x2="0.85" y2="1"><stop offset="0" stop-color="#4c8dc0"/><stop offset="1" stop-color="#2f6797"/></linearGradient><linearGradient id="py6" x1="0.8" y1="0.85" x2="0.2" y2="0"><stop offset="0" stop-color="#ffe052"/><stop offset="1" stop-color="#f4c01e"/></linearGradient><path fill="url(#pb6)" d="M14.25.18l.9.2.73.26.59.3.45.32.34.34.25.34.16.33.1.3.04.26.02.2-.01.13V8.5l-.05.63-.13.55-.21.46-.26.38-.3.31-.33.25-.35.19-.35.14-.33.1-.3.07-.26.04-.21.02H8.77l-.69.05-.59.14-.5.22-.41.27-.33.32-.27.35-.2.36-.15.37-.1.35-.07.32-.04.27-.02.21v3.06H3.17l-.21-.03-.28-.07-.32-.12-.35-.18-.36-.26-.36-.36-.35-.46-.32-.59-.28-.73-.21-.88-.14-1.05-.05-1.23.06-1.22.16-1.04.24-.87.32-.71.36-.57.4-.44.42-.33.42-.24.4-.16.36-.1.32-.05.24-.01h.16l.06.01h8.16v-.83H6.18l-.01-2.75-.02-.37.05-.34.11-.31.17-.28.25-.26.31-.23.38-.2.44-.18.51-.15.58-.12.64-.1.71-.06.77-.04.84-.02 1.27.05zm-6.3 1.98l-.23.33-.08.41.08.41.23.34.33.22.41.09.41-.09.33-.22.23-.34.08-.41-.08-.41-.23-.33-.33-.22-.41-.09-.41.09z"/><path fill="url(#py6)" d="M21.04 6.11l.28.06.32.12.35.18.36.27.36.35.35.47.32.59.28.73.21.88.14 1.04.05 1.23-.06 1.23-.16 1.04-.24.86-.32.71-.36.57-.4.45-.42.33-.42.24-.4.16-.36.09-.32.05-.24.02-.16-.01h-8.22v.82h5.84l.01 2.76.02.36-.05.34-.11.31-.17.29-.25.25-.31.24-.38.2-.44.17-.51.15-.58.13-.64.09-.71.07-.77.04-.84.01-1.27-.04-1.07-.14-.9-.2-.73-.25-.59-.3-.45-.33-.34-.34-.25-.34-.16-.33-.1-.3-.04-.25-.02-.2.01-.13v-5.34l.05-.64.13-.54.21-.46.26-.38.3-.32.33-.24.35-.2.35-.14.33-.1.3-.06.26-.04.21-.02.13-.01h5.84l.69-.05.59-.14.5-.21.41-.28.33-.32.27-.35.2-.36.15-.36.1-.35.07-.32.04-.28.02-.21V6.07h2.09l.14.01zm-6.47 14.25l-.23.33-.08.41.08.41.23.33.33.23.41.08.41-.08.33-.23.23-.33.08-.41-.08-.41-.23-.33-.33-.23-.41-.08-.41.08z"/></svg>
<span class="t" style="left:395.60px;top:782.88px;font-size:24px;line-height:24px;color:#dfe1e5;letter-spacing:-0.354px;">exceptions.py</span>
<svg style="left:363.8px;top:824.9px;" width="24.2" height="24.2" viewBox="0 0 24 24"><linearGradient id="pb7" x1="0.1" y1="0" x2="0.85" y2="1"><stop offset="0" stop-color="#4c8dc0"/><stop offset="1" stop-color="#2f6797"/></linearGradient><linearGradient id="py7" x1="0.8" y1="0.85" x2="0.2" y2="0"><stop offset="0" stop-color="#ffe052"/><stop offset="1" stop-color="#f4c01e"/></linearGradient><path fill="url(#pb7)" d="M14.25.18l.9.2.73.26.59.3.45.32.34.34.25.34.16.33.1.3.04.26.02.2-.01.13V8.5l-.05.63-.13.55-.21.46-.26.38-.3.31-.33.25-.35.19-.35.14-.33.1-.3.07-.26.04-.21.02H8.77l-.69.05-.59.14-.5.22-.41.27-.33.32-.27.35-.2.36-.15.37-.1.35-.07.32-.04.27-.02.21v3.06H3.17l-.21-.03-.28-.07-.32-.12-.35-.18-.36-.26-.36-.36-.35-.46-.32-.59-.28-.73-.21-.88-.14-1.05-.05-1.23.06-1.22.16-1.04.24-.87.32-.71.36-.57.4-.44.42-.33.42-.24.4-.16.36-.1.32-.05.24-.01h.16l.06.01h8.16v-.83H6.18l-.01-2.75-.02-.37.05-.34.11-.31.17-.28.25-.26.31-.23.38-.2.44-.18.51-.15.58-.12.64-.1.71-.06.77-.04.84-.02 1.27.05zm-6.3 1.98l-.23.33-.08.41.08.41.23.34.33.22.41.09.41-.09.33-.22.23-.34.08-.41-.08-.41-.23-.33-.33-.22-.41-.09-.41.09z"/><path fill="url(#py7)" d="M21.04 6.11l.28.06.32.12.35.18.36.27.36.35.35.47.32.59.28.73.21.88.14 1.04.05 1.23-.06 1.23-.16 1.04-.24.86-.32.71-.36.57-.4.45-.42.33-.42.24-.4.16-.36.09-.32.05-.24.02-.16-.01h-8.22v.82h5.84l.01 2.76.02.36-.05.34-.11.31-.17.29-.25.25-.31.24-.38.2-.44.17-.51.15-.58.13-.64.09-.71.07-.77.04-.84.01-1.27-.04-1.07-.14-.9-.2-.73-.25-.59-.3-.45-.33-.34-.34-.25-.34-.16-.33-.1-.3-.04-.25-.02-.2.01-.13v-5.34l.05-.64.13-.54.21-.46.26-.38.3-.32.33-.24.35-.2.35-.14.33-.1.3-.06.26-.04.21-.02.13-.01h5.84l.69-.05.59-.14.5-.21.41-.28.33-.32.27-.35.2-.36.15-.36.1-.35.07-.32.04-.28.02-.21V6.07h2.09l.14.01zm-6.47 14.25l-.23.33-.08.41.08.41.23.33.33.23.41.08.41-.08.33-.23.23-.33.08-.41-.08-.41-.23-.33-.33-.23-.41-.08-.41.08z"/></svg>
<span class="t" style="left:395.60px;top:824.88px;font-size:24px;line-height:24px;color:#dfe1e5;letter-spacing:-0.083px;">filters.py</span>
<svg style="left:363.8px;top:866.9px;" width="24.2" height="24.2" viewBox="0 0 24 24"><linearGradient id="pb8" x1="0.1" y1="0" x2="0.85" y2="1"><stop offset="0" stop-color="#4c8dc0"/><stop offset="1" stop-color="#2f6797"/></linearGradient><linearGradient id="py8" x1="0.8" y1="0.85" x2="0.2" y2="0"><stop offset="0" stop-color="#ffe052"/><stop offset="1" stop-color="#f4c01e"/></linearGradient><path fill="url(#pb8)" d="M14.25.18l.9.2.73.26.59.3.45.32.34.34.25.34.16.33.1.3.04.26.02.2-.01.13V8.5l-.05.63-.13.55-.21.46-.26.38-.3.31-.33.25-.35.19-.35.14-.33.1-.3.07-.26.04-.21.02H8.77l-.69.05-.59.14-.5.22-.41.27-.33.32-.27.35-.2.36-.15.37-.1.35-.07.32-.04.27-.02.21v3.06H3.17l-.21-.03-.28-.07-.32-.12-.35-.18-.36-.26-.36-.36-.35-.46-.32-.59-.28-.73-.21-.88-.14-1.05-.05-1.23.06-1.22.16-1.04.24-.87.32-.71.36-.57.4-.44.42-.33.42-.24.4-.16.36-.1.32-.05.24-.01h.16l.06.01h8.16v-.83H6.18l-.01-2.75-.02-.37.05-.34.11-.31.17-.28.25-.26.31-.23.38-.2.44-.18.51-.15.58-.12.64-.1.71-.06.77-.04.84-.02 1.27.05zm-6.3 1.98l-.23.33-.08.41.08.41.23.34.33.22.41.09.41-.09.33-.22.23-.34.08-.41-.08-.41-.23-.33-.33-.22-.41-.09-.41.09z"/><path fill="url(#py8)" d="M21.04 6.11l.28.06.32.12.35.18.36.27.36.35.35.47.32.59.28.73.21.88.14 1.04.05 1.23-.06 1.23-.16 1.04-.24.86-.32.71-.36.57-.4.45-.42.33-.42.24-.4.16-.36.09-.32.05-.24.02-.16-.01h-8.22v.82h5.84l.01 2.76.02.36-.05.34-.11.31-.17.29-.25.25-.31.24-.38.2-.44.17-.51.15-.58.13-.64.09-.71.07-.77.04-.84.01-1.27-.04-1.07-.14-.9-.2-.73-.25-.59-.3-.45-.33-.34-.34-.25-.34-.16-.33-.1-.3-.04-.25-.02-.2.01-.13v-5.34l.05-.64.13-.54.21-.46.26-.38.3-.32.33-.24.35-.2.35-.14.33-.1.3-.06.26-.04.21-.02.13-.01h5.84l.69-.05.59-.14.5-.21.41-.28.33-.32.27-.35.2-.36.15-.36.1-.35.07-.32.04-.28.02-.21V6.07h2.09l.14.01zm-6.47 14.25l-.23.33-.08.41.08.41.23.33.33.23.41.08.41-.08.33-.23.23-.33.08-.41-.08-.41-.23-.33-.33-.23-.41-.08-.41.08z"/></svg>
<span class="t" style="left:395.60px;top:866.88px;font-size:24px;line-height:24px;color:#dfe1e5;letter-spacing:-0.057px;">forms.py</span>
<svg style="left:363.8px;top:908.9px;" width="24.2" height="24.2" viewBox="0 0 24 24"><linearGradient id="pb9" x1="0.1" y1="0" x2="0.85" y2="1"><stop offset="0" stop-color="#4c8dc0"/><stop offset="1" stop-color="#2f6797"/></linearGradient><linearGradient id="py9" x1="0.8" y1="0.85" x2="0.2" y2="0"><stop offset="0" stop-color="#ffe052"/><stop offset="1" stop-color="#f4c01e"/></linearGradient><path fill="url(#pb9)" d="M14.25.18l.9.2.73.26.59.3.45.32.34.34.25.34.16.33.1.3.04.26.02.2-.01.13V8.5l-.05.63-.13.55-.21.46-.26.38-.3.31-.33.25-.35.19-.35.14-.33.1-.3.07-.26.04-.21.02H8.77l-.69.05-.59.14-.5.22-.41.27-.33.32-.27.35-.2.36-.15.37-.1.35-.07.32-.04.27-.02.21v3.06H3.17l-.21-.03-.28-.07-.32-.12-.35-.18-.36-.26-.36-.36-.35-.46-.32-.59-.28-.73-.21-.88-.14-1.05-.05-1.23.06-1.22.16-1.04.24-.87.32-.71.36-.57.4-.44.42-.33.42-.24.4-.16.36-.1.32-.05.24-.01h.16l.06.01h8.16v-.83H6.18l-.01-2.75-.02-.37.05-.34.11-.31.17-.28.25-.26.31-.23.38-.2.44-.18.51-.15.58-.12.64-.1.71-.06.77-.04.84-.02 1.27.05zm-6.3 1.98l-.23.33-.08.41.08.41.23.34.33.22.41.09.41-.09.33-.22.23-.34.08-.41-.08-.41-.23-.33-.33-.22-.41-.09-.41.09z"/><path fill="url(#py9)" d="M21.04 6.11l.28.06.32.12.35.18.36.27.36.35.35.47.32.59.28.73.21.88.14 1.04.05 1.23-.06 1.23-.16 1.04-.24.86-.32.71-.36.57-.4.45-.42.33-.42.24-.4.16-.36.09-.32.05-.24.02-.16-.01h-8.22v.82h5.84l.01 2.76.02.36-.05.34-.11.31-.17.29-.25.25-.31.24-.38.2-.44.17-.51.15-.58.13-.64.09-.71.07-.77.04-.84.01-1.27-.04-1.07-.14-.9-.2-.73-.25-.59-.3-.45-.33-.34-.34-.25-.34-.16-.33-.1-.3-.04-.25-.02-.2.01-.13v-5.34l.05-.64.13-.54.21-.46.26-.38.3-.32.33-.24.35-.2.35-.14.33-.1.3-.06.26-.04.21-.02.13-.01h5.84l.69-.05.59-.14.5-.21.41-.28.33-.32.27-.35.2-.36.15-.36.1-.35.07-.32.04-.28.02-.21V6.07h2.09l.14.01zm-6.47 14.25l-.23.33-.08.41.08.41.23.33.33.23.41.08.41-.08.33-.23.23-.33.08-.41-.08-.41-.23-.33-.33-.23-.41-.08-.41.08z"/></svg>
<span class="t" style="left:395.60px;top:908.88px;font-size:24px;line-height:24px;color:#dfe1e5;letter-spacing:-0.472px;">helpers.py</span>
<svg style="left:363.8px;top:950.9px;" width="24.2" height="24.2" viewBox="0 0 24 24"><linearGradient id="pb10" x1="0.1" y1="0" x2="0.85" y2="1"><stop offset="0" stop-color="#4c8dc0"/><stop offset="1" stop-color="#2f6797"/></linearGradient><linearGradient id="py10" x1="0.8" y1="0.85" x2="0.2" y2="0"><stop offset="0" stop-color="#ffe052"/><stop offset="1" stop-color="#f4c01e"/></linearGradient><path fill="url(#pb10)" d="M14.25.18l.9.2.73.26.59.3.45.32.34.34.25.34.16.33.1.3.04.26.02.2-.01.13V8.5l-.05.63-.13.55-.21.46-.26.38-.3.31-.33.25-.35.19-.35.14-.33.1-.3.07-.26.04-.21.02H8.77l-.69.05-.59.14-.5.22-.41.27-.33.32-.27.35-.2.36-.15.37-.1.35-.07.32-.04.27-.02.21v3.06H3.17l-.21-.03-.28-.07-.32-.12-.35-.18-.36-.26-.36-.36-.35-.46-.32-.59-.28-.73-.21-.88-.14-1.05-.05-1.23.06-1.22.16-1.04.24-.87.32-.71.36-.57.4-.44.42-.33.42-.24.4-.16.36-.1.32-.05.24-.01h.16l.06.01h8.16v-.83H6.18l-.01-2.75-.02-.37.05-.34.11-.31.17-.28.25-.26.31-.23.38-.2.44-.18.51-.15.58-.12.64-.1.71-.06.77-.04.84-.02 1.27.05zm-6.3 1.98l-.23.33-.08.41.08.41.23.34.33.22.41.09.41-.09.33-.22.23-.34.08-.41-.08-.41-.23-.33-.33-.22-.41-.09-.41.09z"/><path fill="url(#py10)" d="M21.04 6.11l.28.06.32.12.35.18.36.27.36.35.35.47.32.59.28.73.21.88.14 1.04.05 1.23-.06 1.23-.16 1.04-.24.86-.32.71-.36.57-.4.45-.42.33-.42.24-.4.16-.36.09-.32.05-.24.02-.16-.01h-8.22v.82h5.84l.01 2.76.02.36-.05.34-.11.31-.17.29-.25.25-.31.24-.38.2-.44.17-.51.15-.58.13-.64.09-.71.07-.77.04-.84.01-1.27-.04-1.07-.14-.9-.2-.73-.25-.59-.3-.45-.33-.34-.34-.25-.34-.16-.33-.1-.3-.04-.25-.02-.2.01-.13v-5.34l.05-.64.13-.54.21-.46.26-.38.3-.32.33-.24.35-.2.35-.14.33-.1.3-.06.26-.04.21-.02.13-.01h5.84l.69-.05.59-.14.5-.21.41-.28.33-.32.27-.35.2-.36.15-.36.1-.35.07-.32.04-.28.02-.21V6.07h2.09l.14.01zm-6.47 14.25l-.23.33-.08.41.08.41.23.33.33.23.41.08.41-.08.33-.23.23-.33.08-.41-.08-.41-.23-.33-.33-.23-.41-.08-.41.08z"/></svg>
<span class="t" style="left:395.60px;top:950.88px;font-size:24px;line-height:24px;color:#dfe1e5;letter-spacing:-0.250px;">models.py</span>
<svg style="left:363.8px;top:992.9px;" width="24.2" height="24.2" viewBox="0 0 24 24"><linearGradient id="pb11" x1="0.1" y1="0" x2="0.85" y2="1"><stop offset="0" stop-color="#4c8dc0"/><stop offset="1" stop-color="#2f6797"/></linearGradient><linearGradient id="py11" x1="0.8" y1="0.85" x2="0.2" y2="0"><stop offset="0" stop-color="#ffe052"/><stop offset="1" stop-color="#f4c01e"/></linearGradient><path fill="url(#pb11)" d="M14.25.18l.9.2.73.26.59.3.45.32.34.34.25.34.16.33.1.3.04.26.02.2-.01.13V8.5l-.05.63-.13.55-.21.46-.26.38-.3.31-.33.25-.35.19-.35.14-.33.1-.3.07-.26.04-.21.02H8.77l-.69.05-.59.14-.5.22-.41.27-.33.32-.27.35-.2.36-.15.37-.1.35-.07.32-.04.27-.02.21v3.06H3.17l-.21-.03-.28-.07-.32-.12-.35-.18-.36-.26-.36-.36-.35-.46-.32-.59-.28-.73-.21-.88-.14-1.05-.05-1.23.06-1.22.16-1.04.24-.87.32-.71.36-.57.4-.44.42-.33.42-.24.4-.16.36-.1.32-.05.24-.01h.16l.06.01h8.16v-.83H6.18l-.01-2.75-.02-.37.05-.34.11-.31.17-.28.25-.26.31-.23.38-.2.44-.18.51-.15.58-.12.64-.1.71-.06.77-.04.84-.02 1.27.05zm-6.3 1.98l-.23.33-.08.41.08.41.23.34.33.22.41.09.41-.09.33-.22.23-.34.08-.41-.08-.41-.23-.33-.33-.22-.41-.09-.41.09z"/><path fill="url(#py11)" d="M21.04 6.11l.28.06.32.12.35.18.36.27.36.35.35.47.32.59.28.73.21.88.14 1.04.05 1.23-.06 1.23-.16 1.04-.24.86-.32.71-.36.57-.4.45-.42.33-.42.24-.4.16-.36.09-.32.05-.24.02-.16-.01h-8.22v.82h5.84l.01 2.76.02.36-.05.34-.11.31-.17.29-.25.25-.31.24-.38.2-.44.17-.51.15-.58.13-.64.09-.71.07-.77.04-.84.01-1.27-.04-1.07-.14-.9-.2-.73-.25-.59-.3-.45-.33-.34-.34-.25-.34-.16-.33-.1-.3-.04-.25-.02-.2.01-.13v-5.34l.05-.64.13-.54.21-.46.26-.38.3-.32.33-.24.35-.2.35-.14.33-.1.3-.06.26-.04.21-.02.13-.01h5.84l.69-.05.59-.14.5-.21.41-.28.33-.32.27-.35.2-.36.15-.36.1-.35.07-.32.04-.28.02-.21V6.07h2.09l.14.01zm-6.47 14.25l-.23.33-.08.41.08.41.23.33.33.23.41.08.41-.08.33-.23.23-.33.08-.41-.08-.41-.23-.33-.33-.23-.41-.08-.41.08z"/></svg>
<span class="t" style="left:395.60px;top:992.88px;font-size:24px;line-height:24px;color:#dfe1e5;letter-spacing:0.111px;">options.py</span>
<svg style="left:363.8px;top:1034.9px;" width="24.2" height="24.2" viewBox="0 0 24 24"><linearGradient id="pb12" x1="0.1" y1="0" x2="0.85" y2="1"><stop offset="0" stop-color="#4c8dc0"/><stop offset="1" stop-color="#2f6797"/></linearGradient><linearGradient id="py12" x1="0.8" y1="0.85" x2="0.2" y2="0"><stop offset="0" stop-color="#ffe052"/><stop offset="1" stop-color="#f4c01e"/></linearGradient><path fill="url(#pb12)" d="M14.25.18l.9.2.73.26.59.3.45.32.34.34.25.34.16.33.1.3.04.26.02.2-.01.13V8.5l-.05.63-.13.55-.21.46-.26.38-.3.31-.33.25-.35.19-.35.14-.33.1-.3.07-.26.04-.21.02H8.77l-.69.05-.59.14-.5.22-.41.27-.33.32-.27.35-.2.36-.15.37-.1.35-.07.32-.04.27-.02.21v3.06H3.17l-.21-.03-.28-.07-.32-.12-.35-.18-.36-.26-.36-.36-.35-.46-.32-.59-.28-.73-.21-.88-.14-1.05-.05-1.23.06-1.22.16-1.04.24-.87.32-.71.36-.57.4-.44.42-.33.42-.24.4-.16.36-.1.32-.05.24-.01h.16l.06.01h8.16v-.83H6.18l-.01-2.75-.02-.37.05-.34.11-.31.17-.28.25-.26.31-.23.38-.2.44-.18.51-.15.58-.12.64-.1.71-.06.77-.04.84-.02 1.27.05zm-6.3 1.98l-.23.33-.08.41.08.41.23.34.33.22.41.09.41-.09.33-.22.23-.34.08-.41-.08-.41-.23-.33-.33-.22-.41-.09-.41.09z"/><path fill="url(#py12)" d="M21.04 6.11l.28.06.32.12.35.18.36.27.36.35.35.47.32.59.28.73.21.88.14 1.04.05 1.23-.06 1.23-.16 1.04-.24.86-.32.71-.36.57-.4.45-.42.33-.42.24-.4.16-.36.09-.32.05-.24.02-.16-.01h-8.22v.82h5.84l.01 2.76.02.36-.05.34-.11.31-.17.29-.25.25-.31.24-.38.2-.44.17-.51.15-.58.13-.64.09-.71.07-.77.04-.84.01-1.27-.04-1.07-.14-.9-.2-.73-.25-.59-.3-.45-.33-.34-.34-.25-.34-.16-.33-.1-.3-.04-.25-.02-.2.01-.13v-5.34l.05-.64.13-.54.21-.46.26-.38.3-.32.33-.24.35-.2.35-.14.33-.1.3-.06.26-.04.21-.02.13-.01h5.84l.69-.05.59-.14.5-.21.41-.28.33-.32.27-.35.2-.36.15-.36.1-.35.07-.32.04-.28.02-.21V6.07h2.09l.14.01zm-6.47 14.25l-.23.33-.08.41.08.41.23.33.33.23.41.08.41-.08.33-.23.23-.33.08-.41-.08-.41-.23-.33-.33-.23-.41-.08-.41.08z"/></svg>
<span class="t" style="left:395.60px;top:1034.88px;font-size:24px;line-height:24px;color:#dfe1e5;letter-spacing:-0.664px;">sites.py</span>
<svg style="left:363.8px;top:1076.9px;" width="24.2" height="24.2" viewBox="0 0 24 24"><linearGradient id="pb13" x1="0.1" y1="0" x2="0.85" y2="1"><stop offset="0" stop-color="#4c8dc0"/><stop offset="1" stop-color="#2f6797"/></linearGradient><linearGradient id="py13" x1="0.8" y1="0.85" x2="0.2" y2="0"><stop offset="0" stop-color="#ffe052"/><stop offset="1" stop-color="#f4c01e"/></linearGradient><path fill="url(#pb13)" d="M14.25.18l.9.2.73.26.59.3.45.32.34.34.25.34.16.33.1.3.04.26.02.2-.01.13V8.5l-.05.63-.13.55-.21.46-.26.38-.3.31-.33.25-.35.19-.35.14-.33.1-.3.07-.26.04-.21.02H8.77l-.69.05-.59.14-.5.22-.41.27-.33.32-.27.35-.2.36-.15.37-.1.35-.07.32-.04.27-.02.21v3.06H3.17l-.21-.03-.28-.07-.32-.12-.35-.18-.36-.26-.36-.36-.35-.46-.32-.59-.28-.73-.21-.88-.14-1.05-.05-1.23.06-1.22.16-1.04.24-.87.32-.71.36-.57.4-.44.42-.33.42-.24.4-.16.36-.1.32-.05.24-.01h.16l.06.01h8.16v-.83H6.18l-.01-2.75-.02-.37.05-.34.11-.31.17-.28.25-.26.31-.23.38-.2.44-.18.51-.15.58-.12.64-.1.71-.06.77-.04.84-.02 1.27.05zm-6.3 1.98l-.23.33-.08.41.08.41.23.34.33.22.41.09.41-.09.33-.22.23-.34.08-.41-.08-.41-.23-.33-.33-.22-.41-.09-.41.09z"/><path fill="url(#py13)" d="M21.04 6.11l.28.06.32.12.35.18.36.27.36.35.35.47.32.59.28.73.21.88.14 1.04.05 1.23-.06 1.23-.16 1.04-.24.86-.32.71-.36.57-.4.45-.42.33-.42.24-.4.16-.36.09-.32.05-.24.02-.16-.01h-8.22v.82h5.84l.01 2.76.02.36-.05.34-.11.31-.17.29-.25.25-.31.24-.38.2-.44.17-.51.15-.58.13-.64.09-.71.07-.77.04-.84.01-1.27-.04-1.07-.14-.9-.2-.73-.25-.59-.3-.45-.33-.34-.34-.25-.34-.16-.33-.1-.3-.04-.25-.02-.2.01-.13v-5.34l.05-.64.13-.54.21-.46.26-.38.3-.32.33-.24.35-.2.35-.14.33-.1.3-.06.26-.04.21-.02.13-.01h5.84l.69-.05.59-.14.5-.21.41-.28.33-.32.27-.35.2-.36.15-.36.1-.35.07-.32.04-.28.02-.21V6.07h2.09l.14.01zm-6.47 14.25l-.23.33-.08.41.08.41.23.33.33.23.41.08.41-.08.33-.23.23-.33.08-.41-.08-.41-.23-.33-.33-.23-.41-.08-.41.08z"/></svg>
<span class="t" style="left:395.60px;top:1076.88px;font-size:24px;line-height:24px;color:#dfe1e5;letter-spacing:-0.600px;">tests.py</span>
<svg style="left:363.8px;top:1118.9px;" width="24.2" height="24.2" viewBox="0 0 24 24"><linearGradient id="pb14" x1="0.1" y1="0" x2="0.85" y2="1"><stop offset="0" stop-color="#4c8dc0"/><stop offset="1" stop-color="#2f6797"/></linearGradient><linearGradient id="py14" x1="0.8" y1="0.85" x2="0.2" y2="0"><stop offset="0" stop-color="#ffe052"/><stop offset="1" stop-color="#f4c01e"/></linearGradient><path fill="url(#pb14)" d="M14.25.18l.9.2.73.26.59.3.45.32.34.34.25.34.16.33.1.3.04.26.02.2-.01.13V8.5l-.05.63-.13.55-.21.46-.26.38-.3.31-.33.25-.35.19-.35.14-.33.1-.3.07-.26.04-.21.02H8.77l-.69.05-.59.14-.5.22-.41.27-.33.32-.27.35-.2.36-.15.37-.1.35-.07.32-.04.27-.02.21v3.06H3.17l-.21-.03-.28-.07-.32-.12-.35-.18-.36-.26-.36-.36-.35-.46-.32-.59-.28-.73-.21-.88-.14-1.05-.05-1.23.06-1.22.16-1.04.24-.87.32-.71.36-.57.4-.44.42-.33.42-.24.4-.16.36-.1.32-.05.24-.01h.16l.06.01h8.16v-.83H6.18l-.01-2.75-.02-.37.05-.34.11-.31.17-.28.25-.26.31-.23.38-.2.44-.18.51-.15.58-.12.64-.1.71-.06.77-.04.84-.02 1.27.05zm-6.3 1.98l-.23.33-.08.41.08.41.23.34.33.22.41.09.41-.09.33-.22.23-.34.08-.41-.08-.41-.23-.33-.33-.22-.41-.09-.41.09z"/><path fill="url(#py14)" d="M21.04 6.11l.28.06.32.12.35.18.36.27.36.35.35.47.32.59.28.73.21.88.14 1.04.05 1.23-.06 1.23-.16 1.04-.24.86-.32.71-.36.57-.4.45-.42.33-.42.24-.4.16-.36.09-.32.05-.24.02-.16-.01h-8.22v.82h5.84l.01 2.76.02.36-.05.34-.11.31-.17.29-.25.25-.31.24-.38.2-.44.17-.51.15-.58.13-.64.09-.71.07-.77.04-.84.01-1.27-.04-1.07-.14-.9-.2-.73-.25-.59-.3-.45-.33-.34-.34-.25-.34-.16-.33-.1-.3-.04-.25-.02-.2.01-.13v-5.34l.05-.64.13-.54.21-.46.26-.38.3-.32.33-.24.35-.2.35-.14.33-.1.3-.06.26-.04.21-.02.13-.01h5.84l.69-.05.59-.14.5-.21.41-.28.33-.32.27-.35.2-.36.15-.36.1-.35.07-.32.04-.28.02-.21V6.07h2.09l.14.01zm-6.47 14.25l-.23.33-.08.41.08.41.23.33.33.23.41.08.41-.08.33-.23.23-.33.08-.41-.08-.41-.23-.33-.33-.23-.41-.08-.41.08z"/></svg>
<span class="t" style="left:395.60px;top:1118.88px;font-size:24px;line-height:24px;color:#dfe1e5;letter-spacing:-0.014px;">utils.py</span>
<svg style="left:363.8px;top:1160.9px;" width="24.2" height="24.2" viewBox="0 0 24 24"><linearGradient id="pb15" x1="0.1" y1="0" x2="0.85" y2="1"><stop offset="0" stop-color="#4c8dc0"/><stop offset="1" stop-color="#2f6797"/></linearGradient><linearGradient id="py15" x1="0.8" y1="0.85" x2="0.2" y2="0"><stop offset="0" stop-color="#ffe052"/><stop offset="1" stop-color="#f4c01e"/></linearGradient><path fill="url(#pb15)" d="M14.25.18l.9.2.73.26.59.3.45.32.34.34.25.34.16.33.1.3.04.26.02.2-.01.13V8.5l-.05.63-.13.55-.21.46-.26.38-.3.31-.33.25-.35.19-.35.14-.33.1-.3.07-.26.04-.21.02H8.77l-.69.05-.59.14-.5.22-.41.27-.33.32-.27.35-.2.36-.15.37-.1.35-.07.32-.04.27-.02.21v3.06H3.17l-.21-.03-.28-.07-.32-.12-.35-.18-.36-.26-.36-.36-.35-.46-.32-.59-.28-.73-.21-.88-.14-1.05-.05-1.23.06-1.22.16-1.04.24-.87.32-.71.36-.57.4-.44.42-.33.42-.24.4-.16.36-.1.32-.05.24-.01h.16l.06.01h8.16v-.83H6.18l-.01-2.75-.02-.37.05-.34.11-.31.17-.28.25-.26.31-.23.38-.2.44-.18.51-.15.58-.12.64-.1.71-.06.77-.04.84-.02 1.27.05zm-6.3 1.98l-.23.33-.08.41.08.41.23.34.33.22.41.09.41-.09.33-.22.23-.34.08-.41-.08-.41-.23-.33-.33-.22-.41-.09-.41.09z"/><path fill="url(#py15)" d="M21.04 6.11l.28.06.32.12.35.18.36.27.36.35.35.47.32.59.28.73.21.88.14 1.04.05 1.23-.06 1.23-.16 1.04-.24.86-.32.71-.36.57-.4.45-.42.33-.42.24-.4.16-.36.09-.32.05-.24.02-.16-.01h-8.22v.82h5.84l.01 2.76.02.36-.05.34-.11.31-.17.29-.25.25-.31.24-.38.2-.44.17-.51.15-.58.13-.64.09-.71.07-.77.04-.84.01-1.27-.04-1.07-.14-.9-.2-.73-.25-.59-.3-.45-.33-.34-.34-.25-.34-.16-.33-.1-.3-.04-.25-.02-.2.01-.13v-5.34l.05-.64.13-.54.21-.46.26-.38.3-.32.33-.24.35-.2.35-.14.33-.1.3-.06.26-.04.21-.02.13-.01h5.84l.69-.05.59-.14.5-.21.41-.28.33-.32.27-.35.2-.36.15-.36.1-.35.07-.32.04-.28.02-.21V6.07h2.09l.14.01zm-6.47 14.25l-.23.33-.08.41.08.41.23.33.33.23.41.08.41-.08.33-.23.23-.33.08-.41-.08-.41-.23-.33-.33-.23-.41-.08-.41.08z"/></svg>
<span class="t" style="left:395.65px;top:1160.88px;font-size:24px;line-height:24px;color:#dfe1e5;letter-spacing:-0.250px;">widgets.py</span>
<svg style="left:292px;top:1201px;" width="28" height="28" viewBox="0 0 16 16"><path d="M6 4.5L9.5 8L6 11.5" fill="none" stroke="#b4b8bf" stroke-width="1.1" stroke-linecap="round" stroke-linejoin="round"/></svg>
<svg style="left:329px;top:1201px;" width="28" height="28" viewBox="0 0 16 16"><path d="M1.5 4C1.5 3.17 2.17 2.5 3 2.5H5.93C6.1 2.5 6.25 2.58 6.35 2.72L7.44 4.36C7.62 4.64 7.94 4.81 8.27 4.81H13C13.83 4.81 14.5 5.48 14.5 6.31V12C14.5 12.83 13.83 13.5 13 13.5H3C2.17 13.5 1.5 12.83 1.5 12V4Z" fill="#43454a" stroke="#ced0d6" stroke-width="1"/><circle cx="5.9" cy="9.0" r="1.25" fill="none" stroke="#ced0d6" stroke-width="1"/></svg>
<span class="t" style="left:362.60px;top:1202.88px;font-size:24px;line-height:24px;color:#dfe1e5;letter-spacing:-0.119px;">admindocs</span>
<svg style="left:292px;top:1243px;" width="28" height="28" viewBox="0 0 16 16"><path d="M6 4.5L9.5 8L6 11.5" fill="none" stroke="#b4b8bf" stroke-width="1.1" stroke-linecap="round" stroke-linejoin="round"/></svg>
<svg style="left:329px;top:1243px;" width="28" height="28" viewBox="0 0 16 16"><path d="M1.5 4C1.5 3.17 2.17 2.5 3 2.5H5.93C6.1 2.5 6.25 2.58 6.35 2.72L7.44 4.36C7.62 4.64 7.94 4.81 8.27 4.81H13C13.83 4.81 14.5 5.48 14.5 6.31V12C14.5 12.83 13.83 13.5 13 13.5H3C2.17 13.5 1.5 12.83 1.5 12V4Z" fill="#43454a" stroke="#ced0d6" stroke-width="1"/><circle cx="5.9" cy="9.0" r="1.25" fill="none" stroke="#ced0d6" stroke-width="1"/></svg>
<span class="t" style="left:362.60px;top:1244.88px;font-size:24px;line-height:24px;color:#dfe1e5;letter-spacing:-0.233px;">auth</span>
<svg style="left:292px;top:1285px;" width="28" height="28" viewBox="0 0 16 16"><path d="M6 4.5L9.5 8L6 11.5" fill="none" stroke="#b4b8bf" stroke-width="1.1" stroke-linecap="round" stroke-linejoin="round"/></svg>
<svg style="left:329px;top:1285px;" width="28" height="28" viewBox="0 0 16 16"><path d="M1.5 4C1.5 3.17 2.17 2.5 3 2.5H5.93C6.1 2.5 6.25 2.58 6.35 2.72L7.44 4.36C7.62 4.64 7.94 4.81 8.27 4.81H13C13.83 4.81 14.5 5.48 14.5 6.31V12C14.5 12.83 13.83 13.5 13 13.5H3C2.17 13.5 1.5 12.83 1.5 12V4Z" fill="#43454a" stroke="#ced0d6" stroke-width="1"/><circle cx="5.9" cy="9.0" r="1.25" fill="none" stroke="#ced0d6" stroke-width="1"/></svg>
<span class="t" style="left:362.60px;top:1286.88px;font-size:24px;line-height:24px;color:#dfe1e5;letter-spacing:-0.018px;">contenttypes</span>
<svg style="left:292px;top:1327px;" width="28" height="28" viewBox="0 0 16 16"><path d="M6 4.5L9.5 8L6 11.5" fill="none" stroke="#b4b8bf" stroke-width="1.1" stroke-linecap="round" stroke-linejoin="round"/></svg>
<svg style="left:329px;top:1327px;" width="28" height="28" viewBox="0 0 16 16"><path d="M1.5 4C1.5 3.17 2.17 2.5 3 2.5H5.93C6.1 2.5 6.25 2.58 6.35 2.72L7.44 4.36C7.62 4.64 7.94 4.81 8.27 4.81H13C13.83 4.81 14.5 5.48 14.5 6.31V12C14.5 12.83 13.83 13.5 13 13.5H3C2.17 13.5 1.5 12.83 1.5 12V4Z" fill="#43454a" stroke="#ced0d6" stroke-width="1"/><circle cx="5.9" cy="9.0" r="1.25" fill="none" stroke="#ced0d6" stroke-width="1"/></svg>
<span class="t" style="left:362.60px;top:1328.88px;font-size:24px;line-height:24px;color:#dfe1e5;letter-spacing:-0.325px;">flatpages</span>
<svg style="left:292px;top:1369px;" width="28" height="28" viewBox="0 0 16 16"><path d="M6 4.5L9.5 8L6 11.5" fill="none" stroke="#b4b8bf" stroke-width="1.1" stroke-linecap="round" stroke-linejoin="round"/></svg>
<svg style="left:329px;top:1369px;" width="28" height="28" viewBox="0 0 16 16"><path d="M1.5 4C1.5 3.17 2.17 2.5 3 2.5H5.93C6.1 2.5 6.25 2.58 6.35 2.72L7.44 4.36C7.62 4.64 7.94 4.81 8.27 4.81H13C13.83 4.81 14.5 5.48 14.5 6.31V12C14.5 12.83 13.83 13.5 13 13.5H3C2.17 13.5 1.5 12.83 1.5 12V4Z" fill="#43454a" stroke="#ced0d6" stroke-width="1"/><circle cx="5.9" cy="9.0" r="1.25" fill="none" stroke="#ced0d6" stroke-width="1"/></svg>
<span class="t" style="left:362.60px;top:1370.88px;font-size:24px;line-height:24px;color:#dfe1e5;transform:scaleX(0.9446);transform-origin:0 0;">gis</span>
<svg style="left:292px;top:1411px;" width="28" height="28" viewBox="0 0 16 16"><path d="M6 4.5L9.5 8L6 11.5" fill="none" stroke="#b4b8bf" stroke-width="1.1" stroke-linecap="round" stroke-linejoin="round"/></svg>
<svg style="left:329px;top:1411px;" width="28" height="28" viewBox="0 0 16 16"><path d="M1.5 4C1.5 3.17 2.17 2.5 3 2.5H5.93C6.1 2.5 6.25 2.58 6.35 2.72L7.44 4.36C7.62 4.64 7.94 4.81 8.27 4.81H13C13.83 4.81 14.5 5.48 14.5 6.31V12C14.5 12.83 13.83 13.5 13 13.5H3C2.17 13.5 1.5 12.83 1.5 12V4Z" fill="#43454a" stroke="#ced0d6" stroke-width="1"/><circle cx="5.9" cy="9.0" r="1.25" fill="none" stroke="#ced0d6" stroke-width="1"/></svg>
<span class="t" style="left:362.60px;top:1412.88px;font-size:24px;line-height:24px;color:#dfe1e5;letter-spacing:-0.093px;">humanize</span>
<svg style="left:292px;top:1453px;" width="28" height="28" viewBox="0 0 16 16"><path d="M6 4.5L9.5 8L6 11.5" fill="none" stroke="#b4b8bf" stroke-width="1.1" stroke-linecap="round" stroke-linejoin="round"/></svg>
<svg style="left:329px;top:1453px;" width="28" height="28" viewBox="0 0 16 16"><path d="M1.5 4C1.5 3.17 2.17 2.5 3 2.5H5.93C6.1 2.5 6.25 2.58 6.35 2.72L7.44 4.36C7.62 4.64 7.94 4.81 8.27 4.81H13C13.83 4.81 14.5 5.48 14.5 6.31V12C14.5 12.83 13.83 13.5 13 13.5H3C2.17 13.5 1.5 12.83 1.5 12V4Z" fill="#43454a" stroke="#ced0d6" stroke-width="1"/><circle cx="5.9" cy="9.0" r="1.25" fill="none" stroke="#ced0d6" stroke-width="1"/></svg>
<span class="t" style="left:362.60px;top:1454.88px;font-size:24px;line-height:24px;color:#dfe1e5;transform:scaleX(0.9122);transform-origin:0 0;">messages</span>
<svg style="left:292px;top:1495px;" width="28" height="28" viewBox="0 0 16 16"><path d="M6 4.5L9.5 8L6 11.5" fill="none" stroke="#b4b8bf" stroke-width="1.1" stroke-linecap="round" stroke-linejoin="round"/></svg>
<svg style="left:329px;top:1495px;" width="28" height="28" viewBox="0 0 16 16"><path d="M1.5 4C1.5 3.17 2.17 2.5 3 2.5H5.93C6.1 2.5 6.25 2.58 6.35 2.72L7.44 4.36C7.62 4.64 7.94 4.81 8.27 4.81H13C13.83 4.81 14.5 5.48 14.5 6.31V12C14.5 12.83 13.83 13.5 13 13.5H3C2.17 13.5 1.5 12.83 1.5 12V4Z" fill="#43454a" stroke="#ced0d6" stroke-width="1"/><circle cx="5.9" cy="9.0" r="1.25" fill="none" stroke="#ced0d6" stroke-width="1"/></svg>
<span class="t" style="left:362.60px;top:1496.88px;font-size:24px;line-height:24px;color:#dfe1e5;letter-spacing:-0.464px;">postgres</span>
<svg style="left:292px;top:1537px;" width="28" height="28" viewBox="0 0 16 16"><path d="M6 4.5L9.5 8L6 11.5" fill="none" stroke="#b4b8bf" stroke-width="1.1" stroke-linecap="round" stroke-linejoin="round"/></svg>
<svg style="left:329px;top:1537px;" width="28" height="28" viewBox="0 0 16 16"><path d="M1.5 4C1.5 3.17 2.17 2.5 3 2.5H5.93C6.1 2.5 6.25 2.58 6.35 2.72L7.44 4.36C7.62 4.64 7.94 4.81 8.27 4.81H13C13.83 4.81 14.5 5.48 14.5 6.31V12C14.5 12.83 13.83 13.5 13 13.5H3C2.17 13.5 1.5 12.83 1.5 12V4Z" fill="#43454a" stroke="#ced0d6" stroke-width="1"/><circle cx="5.9" cy="9.0" r="1.25" fill="none" stroke="#ced0d6" stroke-width="1"/></svg>
<span class="t" style="left:362.60px;top:1538.88px;font-size:24px;line-height:24px;color:#dfe1e5;letter-spacing:-0.519px;">redirects</span>
<svg style="left:292px;top:1579px;" width="28" height="28" viewBox="0 0 16 16"><path d="M6 4.5L9.5 8L6 11.5" fill="none" stroke="#b4b8bf" stroke-width="1.1" stroke-linecap="round" stroke-linejoin="round"/></svg>
<svg style="left:329px;top:1579px;" width="28" height="28" viewBox="0 0 16 16"><path d="M1.5 4C1.5 3.17 2.17 2.5 3 2.5H5.93C6.1 2.5 6.25 2.58 6.35 2.72L7.44 4.36C7.62 4.64 7.94 4.81 8.27 4.81H13C13.83 4.81 14.5 5.48 14.5 6.31V12C14.5 12.83 13.83 13.5 13 13.5H3C2.17 13.5 1.5 12.83 1.5 12V4Z" fill="#43454a" stroke="#ced0d6" stroke-width="1"/><circle cx="5.9" cy="9.0" r="1.25" fill="none" stroke="#ced0d6" stroke-width="1"/></svg>
<span class="t" style="left:362.60px;top:1580.88px;font-size:24px;line-height:24px;color:#dfe1e5;transform:scaleX(0.9090);transform-origin:0 0;">sessions</span>
<svg style="left:292px;top:1621px;" width="28" height="28" viewBox="0 0 16 16"><path d="M6 4.5L9.5 8L6 11.5" fill="none" stroke="#b4b8bf" stroke-width="1.1" stroke-linecap="round" stroke-linejoin="round"/></svg>
<svg style="left:329px;top:1621px;" width="28" height="28" viewBox="0 0 16 16"><path d="M1.5 4C1.5 3.17 2.17 2.5 3 2.5H5.93C6.1 2.5 6.25 2.58 6.35 2.72L7.44 4.36C7.62 4.64 7.94 4.81 8.27 4.81H13C13.83 4.81 14.5 5.48 14.5 6.31V12C14.5 12.83 13.83 13.5 13 13.5H3C2.17 13.5 1.5 12.83 1.5 12V4Z" fill="#43454a" stroke="#ced0d6" stroke-width="1"/><circle cx="5.9" cy="9.0" r="1.25" fill="none" stroke="#ced0d6" stroke-width="1"/></svg>
<span class="t" style="left:362.60px;top:1622.88px;font-size:24px;line-height:24px;color:#dfe1e5;letter-spacing:-0.607px;">sitemaps</span>
<svg style="left:292px;top:1663px;" width="28" height="28" viewBox="0 0 16 16"><path d="M6 4.5L9.5 8L6 11.5" fill="none" stroke="#b4b8bf" stroke-width="1.1" stroke-linecap="round" stroke-linejoin="round"/></svg>
<svg style="left:329px;top:1663px;" width="28" height="28" viewBox="0 0 16 16"><path d="M1.5 4C1.5 3.17 2.17 2.5 3 2.5H5.93C6.1 2.5 6.25 2.58 6.35 2.72L7.44 4.36C7.62 4.64 7.94 4.81 8.27 4.81H13C13.83 4.81 14.5 5.48 14.5 6.31V12C14.5 12.83 13.83 13.5 13 13.5H3C2.17 13.5 1.5 12.83 1.5 12V4Z" fill="#43454a" stroke="#ced0d6" stroke-width="1"/><circle cx="5.9" cy="9.0" r="1.25" fill="none" stroke="#ced0d6" stroke-width="1"/></svg>
<span class="t" style="left:362.60px;top:1664.88px;font-size:24px;line-height:24px;color:#dfe1e5;transform:scaleX(0.9078);transform-origin:0 0;">sites</span>
<svg style="left:292px;top:1705px;" width="28" height="28" viewBox="0 0 16 16"><path d="M6 4.5L9.5 8L6 11.5" fill="none" stroke="#b4b8bf" stroke-width="1.1" stroke-linecap="round" stroke-linejoin="round"/></svg>
<svg style="left:329px;top:1705px;" width="28" height="28" viewBox="0 0 16 16"><path d="M1.5 4C1.5 3.17 2.17 2.5 3 2.5H5.93C6.1 2.5 6.25 2.58 6.35 2.72L7.44 4.36C7.62 4.64 7.94 4.81 8.27 4.81H13C13.83 4.81 14.5 5.48 14.5 6.31V12C14.5 12.83 13.83 13.5 13 13.5H3C2.17 13.5 1.5 12.83 1.5 12V4Z" fill="#43454a" stroke="#ced0d6" stroke-width="1"/><circle cx="5.9" cy="9.0" r="1.25" fill="none" stroke="#ced0d6" stroke-width="1"/></svg>
<span class="t" style="left:362.60px;top:1706.88px;font-size:24px;line-height:24px;color:#dfe1e5;letter-spacing:-0.280px;">staticfiles</span>
<div style="left:912px;top:72px;width:189px;height:70px;background:#3d3223;"></div>
<div style="left:703px;top:142px;width:2107px;height:1px;background:#393b40;"></div>
<div style="left:835px;top:143px;width:1975px;height:1px;background:#393b40;"></div>
<div style="left:911px;top:137px;width:190px;height:7px;background:#3574f0;border-radius:3.5px;"></div>
<svg style="left:726.8px;top:95px;" width="24.3" height="24.3" viewBox="0 0 24 24"><linearGradient id="pb16" x1="0.1" y1="0" x2="0.85" y2="1"><stop offset="0" stop-color="#41789f"/><stop offset="1" stop-color="#2c5a82"/></linearGradient><linearGradient id="py16" x1="0.8" y1="0.85" x2="0.2" y2="0"><stop offset="0" stop-color="#d9b83a"/><stop offset="1" stop-color="#c9a22a"/></linearGradient><path fill="url(#pb16)" d="M14.25.18l.9.2.73.26.59.3.45.32.34.34.25.34.16.33.1.3.04.26.02.2-.01.13V8.5l-.05.63-.13.55-.21.46-.26.38-.3.31-.33.25-.35.19-.35.14-.33.1-.3.07-.26.04-.21.02H8.77l-.69.05-.59.14-.5.22-.41.27-.33.32-.27.35-.2.36-.15.37-.1.35-.07.32-.04.27-.02.21v3.06H3.17l-.21-.03-.28-.07-.32-.12-.35-.18-.36-.26-.36-.36-.35-.46-.32-.59-.28-.73-.21-.88-.14-1.05-.05-1.23.06-1.22.16-1.04.24-.87.32-.71.36-.57.4-.44.42-.33.42-.24.4-.16.36-.1.32-.05.24-.01h.16l.06.01h8.16v-.83H6.18l-.01-2.75-.02-.37.05-.34.11-.31.17-.28.25-.26.31-.23.38-.2.44-.18.51-.15.58-.12.64-.1.71-.06.77-.04.84-.02 1.27.05zm-6.3 1.98l-.23.33-.08.41.08.41.23.34.33.22.41.09.41-.09.33-.22.23-.34.08-.41-.08-.41-.23-.33-.33-.22-.41-.09-.41.09z"/><path fill="url(#py16)" d="M21.04 6.11l.28.06.32.12.35.18.36.27.36.35.35.47.32.59.28.73.21.88.14 1.04.05 1.23-.06 1.23-.16 1.04-.24.86-.32.71-.36.57-.4.45-.42.33-.42.24-.4.16-.36.09-.32.05-.24.02-.16-.01h-8.22v.82h5.84l.01 2.76.02.36-.05.34-.11.31-.17.29-.25.25-.31.24-.38.2-.44.17-.51.15-.58.13-.64.09-.71.07-.77.04-.84.01-1.27-.04-1.07-.14-.9-.2-.73-.25-.59-.3-.45-.33-.34-.34-.25-.34-.16-.33-.1-.3-.04-.25-.02-.2.01-.13v-5.34l.05-.64.13-.54.21-.46.26-.38.3-.32.33-.24.35-.2.35-.14.33-.1.3-.06.26-.04.21-.02.13-.01h5.84l.69-.05.59-.14.5-.21.41-.28.33-.32.27-.35.2-.36.15-.36.1-.35.07-.32.04-.28.02-.21V6.07h2.09l.14.01zm-6.47 14.25l-.23.33-.08.41.08.41.23.33.33.23.41.08.41-.08.33-.23.23-.33.08-.41-.08-.41-.23-.33-.33-.23-.41-.08-.41.08z"/></svg>
<span class="t" style="left:761.70px;top:96.28px;font-size:24px;line-height:24px;color:#ced0d6;letter-spacing:-0.086px;">admin.py</span>
<svg style="left:934.8px;top:95px;" width="24.3" height="24.3" viewBox="0 0 24 24"><linearGradient id="pb17" x1="0.1" y1="0" x2="0.85" y2="1"><stop offset="0" stop-color="#4c8dc0"/><stop offset="1" stop-color="#2f6797"/></linearGradient><linearGradient id="py17" x1="0.8" y1="0.85" x2="0.2" y2="0"><stop offset="0" stop-color="#ffe052"/><stop offset="1" stop-color="#f4c01e"/></linearGradient><path fill="url(#pb17)" d="M14.25.18l.9.2.73.26.59.3.45.32.34.34.25.34.16.33.1.3.04.26.02.2-.01.13V8.5l-.05.63-.13.55-.21.46-.26.38-.3.31-.33.25-.35.19-.35.14-.33.1-.3.07-.26.04-.21.02H8.77l-.69.05-.59.14-.5.22-.41.27-.33.32-.27.35-.2.36-.15.37-.1.35-.07.32-.04.27-.02.21v3.06H3.17l-.21-.03-.28-.07-.32-.12-.35-.18-.36-.26-.36-.36-.35-.46-.32-.59-.28-.73-.21-.88-.14-1.05-.05-1.23.06-1.22.16-1.04.24-.87.32-.71.36-.57.4-.44.42-.33.42-.24.4-.16.36-.1.32-.05.24-.01h.16l.06.01h8.16v-.83H6.18l-.01-2.75-.02-.37.05-.34.11-.31.17-.28.25-.26.31-.23.38-.2.44-.18.51-.15.58-.12.64-.1.71-.06.77-.04.84-.02 1.27.05zm-6.3 1.98l-.23.33-.08.41.08.41.23.34.33.22.41.09.41-.09.33-.22.23-.34.08-.41-.08-.41-.23-.33-.33-.22-.41-.09-.41.09z"/><path fill="url(#py17)" d="M21.04 6.11l.28.06.32.12.35.18.36.27.36.35.35.47.32.59.28.73.21.88.14 1.04.05 1.23-.06 1.23-.16 1.04-.24.86-.32.71-.36.57-.4.45-.42.33-.42.24-.4.16-.36.09-.32.05-.24.02-.16-.01h-8.22v.82h5.84l.01 2.76.02.36-.05.34-.11.31-.17.29-.25.25-.31.24-.38.2-.44.17-.51.15-.58.13-.64.09-.71.07-.77.04-.84.01-1.27-.04-1.07-.14-.9-.2-.73-.25-.59-.3-.45-.33-.34-.34-.25-.34-.16-.33-.1-.3-.04-.25-.02-.2.01-.13v-5.34l.05-.64.13-.54.21-.46.26-.38.3-.32.33-.24.35-.2.35-.14.33-.1.3-.06.26-.04.21-.02.13-.01h5.84l.69-.05.59-.14.5-.21.41-.28.33-.32.27-.35.2-.36.15-.36.1-.35.07-.32.04-.28.02-.21V6.07h2.09l.14.01zm-6.47 14.25l-.23.33-.08.41.08.41.23.33.33.23.41.08.41-.08.33-.23.23-.33.08-.41-.08-.41-.23-.33-.33-.23-.41-.08-.41.08z"/></svg>
<span class="t" style="left:970.50px;top:96.28px;font-size:24px;line-height:24px;color:#dfe1e5;transform:scaleX(0.9342);transform-origin:0 0;">sites.py</span>
<svg style="left:1064px;top:98px;" width="18" height="18" viewBox="0 0 18 18"><path d="M3.4 3.6L15 15.2M15 3.6L3.4 15.2" fill="none" stroke="#868a91" stroke-width="2" stroke-linecap="round"/></svg>
<svg style="left:1121.8px;top:95px;" width="24.3" height="24.3" viewBox="0 0 24 24"><linearGradient id="pb18" x1="0.1" y1="0" x2="0.85" y2="1"><stop offset="0" stop-color="#41789f"/><stop offset="1" stop-color="#2c5a82"/></linearGradient><linearGradient id="py18" x1="0.8" y1="0.85" x2="0.2" y2="0"><stop offset="0" stop-color="#d9b83a"/><stop offset="1" stop-color="#c9a22a"/></linearGradient><path fill="url(#pb18)" d="M14.25.18l.9.2.73.26.59.3.45.32.34.34.25.34.16.33.1.3.04.26.02.2-.01.13V8.5l-.05.63-.13.55-.21.46-.26.38-.3.31-.33.25-.35.19-.35.14-.33.1-.3.07-.26.04-.21.02H8.77l-.69.05-.59.14-.5.22-.41.27-.33.32-.27.35-.2.36-.15.37-.1.35-.07.32-.04.27-.02.21v3.06H3.17l-.21-.03-.28-.07-.32-.12-.35-.18-.36-.26-.36-.36-.35-.46-.32-.59-.28-.73-.21-.88-.14-1.05-.05-1.23.06-1.22.16-1.04.24-.87.32-.71.36-.57.4-.44.42-.33.42-.24.4-.16.36-.1.32-.05.24-.01h.16l.06.01h8.16v-.83H6.18l-.01-2.75-.02-.37.05-.34.11-.31.17-.28.25-.26.31-.23.38-.2.44-.18.51-.15.58-.12.64-.1.71-.06.77-.04.84-.02 1.27.05zm-6.3 1.98l-.23.33-.08.41.08.41.23.34.33.22.41.09.41-.09.33-.22.23-.34.08-.41-.08-.41-.23-.33-.33-.22-.41-.09-.41.09z"/><path fill="url(#py18)" d="M21.04 6.11l.28.06.32.12.35.18.36.27.36.35.35.47.32.59.28.73.21.88.14 1.04.05 1.23-.06 1.23-.16 1.04-.24.86-.32.71-.36.57-.4.45-.42.33-.42.24-.4.16-.36.09-.32.05-.24.02-.16-.01h-8.22v.82h5.84l.01 2.76.02.36-.05.34-.11.31-.17.29-.25.25-.31.24-.38.2-.44.17-.51.15-.58.13-.64.09-.71.07-.77.04-.84.01-1.27-.04-1.07-.14-.9-.2-.73-.25-.59-.3-.45-.33-.34-.34-.25-.34-.16-.33-.1-.3-.04-.25-.02-.2.01-.13v-5.34l.05-.64.13-.54.21-.46.26-.38.3-.32.33-.24.35-.2.35-.14.33-.1.3-.06.26-.04.21-.02.13-.01h5.84l.69-.05.59-.14.5-.21.41-.28.33-.32.27-.35.2-.36.15-.36.1-.35.07-.32.04-.28.02-.21V6.07h2.09l.14.01zm-6.47 14.25l-.23.33-.08.41.08.41.23.33.33.23.41.08.41-.08.33-.23.23-.33.08-.41-.08-.41-.23-.33-.33-.23-.41-.08-.41.08z"/></svg>
<span class="t" style="left:1157.50px;top:96.28px;font-size:24px;line-height:24px;color:#ced0d6;letter-spacing:-0.315px;">settings.py</span>
<svg style="left:1345.6px;top:95px;" width="24.3" height="24.3" viewBox="0 0 24 24"><linearGradient id="pb19" x1="0.1" y1="0" x2="0.85" y2="1"><stop offset="0" stop-color="#41789f"/><stop offset="1" stop-color="#2c5a82"/></linearGradient><linearGradient id="py19" x1="0.8" y1="0.85" x2="0.2" y2="0"><stop offset="0" stop-color="#d9b83a"/><stop offset="1" stop-color="#c9a22a"/></linearGradient><path fill="url(#pb19)" d="M14.25.18l.9.2.73.26.59.3.45.32.34.34.25.34.16.33.1.3.04.26.02.2-.01.13V8.5l-.05.63-.13.55-.21.46-.26.38-.3.31-.33.25-.35.19-.35.14-.33.1-.3.07-.26.04-.21.02H8.77l-.69.05-.59.14-.5.22-.41.27-.33.32-.27.35-.2.36-.15.37-.1.35-.07.32-.04.27-.02.21v3.06H3.17l-.21-.03-.28-.07-.32-.12-.35-.18-.36-.26-.36-.36-.35-.46-.32-.59-.28-.73-.21-.88-.14-1.05-.05-1.23.06-1.22.16-1.04.24-.87.32-.71.36-.57.4-.44.42-.33.42-.24.4-.16.36-.1.32-.05.24-.01h.16l.06.01h8.16v-.83H6.18l-.01-2.75-.02-.37.05-.34.11-.31.17-.28.25-.26.31-.23.38-.2.44-.18.51-.15.58-.12.64-.1.71-.06.77-.04.84-.02 1.27.05zm-6.3 1.98l-.23.33-.08.41.08.41.23.34.33.22.41.09.41-.09.33-.22.23-.34.08-.41-.08-.41-.23-.33-.33-.22-.41-.09-.41.09z"/><path fill="url(#py19)" d="M21.04 6.11l.28.06.32.12.35.18.36.27.36.35.35.47.32.59.28.73.21.88.14 1.04.05 1.23-.06 1.23-.16 1.04-.24.86-.32.71-.36.57-.4.45-.42.33-.42.24-.4.16-.36.09-.32.05-.24.02-.16-.01h-8.22v.82h5.84l.01 2.76.02.36-.05.34-.11.31-.17.29-.25.25-.31.24-.38.2-.44.17-.51.15-.58.13-.64.09-.71.07-.77.04-.84.01-1.27-.04-1.07-.14-.9-.2-.73-.25-.59-.3-.45-.33-.34-.34-.25-.34-.16-.33-.1-.3-.04-.25-.02-.2.01-.13v-5.34l.05-.64.13-.54.21-.46.26-.38.3-.32.33-.24.35-.2.35-.14.33-.1.3-.06.26-.04.21-.02.13-.01h5.84l.69-.05.59-.14.5-.21.41-.28.33-.32.27-.35.2-.36.15-.36.1-.35.07-.32.04-.28.02-.21V6.07h2.09l.14.01zm-6.47 14.25l-.23.33-.08.41.08.41.23.33.33.23.41.08.41-.08.33-.23.23-.33.08-.41-.08-.41-.23-.33-.33-.23-.41-.08-.41.08z"/></svg>
<span class="t" style="left:1381.30px;top:96.28px;font-size:24px;line-height:24px;color:#ced0d6;letter-spacing:-0.312px;">models.py</span>
<div style="left:2774.8px;top:96.5px;width:4px;height:4px;background:#ced0d6;border-radius:50%;"></div>
<div style="left:2774.8px;top:105.1px;width:4px;height:4px;background:#ced0d6;border-radius:50%;"></div>
<div style="left:2774.8px;top:114px;width:4px;height:4px;background:#ced0d6;border-radius:50%;"></div>
<div style="left:833px;top:143px;width:2px;height:1603px;background:#313438;"></div>
<div style="left:2518px;top:144px;width:2px;height:1602px;background:#35373b;"></div>
<div style="left:2470px;top:146px;width:341px;height:50px;background:#1e1f22;"></div>
<div style="left:703px;top:720.8px;width:2107px;height:38.5px;background:#26282e;"></div>
<div style="left:833px;top:720.8px;width:2px;height:38.5px;background:#383a3f;"></div>
<div style="left:2518px;top:720.8px;width:2px;height:38.5px;background:#3a3c41;"></div>
<div style="left:838.0px;top:143.3px;width:140px;height:38.5px;background:#393b40;"></div>
<div style="left:1062.0px;top:335.8px;width:42px;height:38.5px;background:#393b40;"></div>
<div style="left:1328.0px;top:451.3px;width:42px;height:38.5px;background:#393b40;"></div>
<div style="left:922.0px;top:451.3px;width:224.0px;height:38.5px;background:#373b39;"></div>
<div style="left:936.0px;top:720.8px;width:224.0px;height:38.5px;background:#373b39;"></div>
<div class="n" style="left:690.8px;top:146.00px;color:#4b5059">1</div>
<div class="c" style="left:838.0px;top:145.00px;"><span style="position:static;color:#868a91">import ...</span></div>
<svg style="left:808.7px;top:148.60000000000002px;" width="28" height="28" viewBox="0 0 16 16"><path d="M6 4.5L9.5 8L6 11.5" fill="none" stroke="#868a91" stroke-width="1.05" stroke-linecap="round" stroke-linejoin="round"/></svg>
<div class="n" style="left:690.8px;top:184.00px;color:#4b5059">25</div>
<div class="n" style="left:690.8px;top:223.00px;color:#4b5059">26</div>
<div class="c" style="left:838.0px;top:222.00px;">all<span style="position:relative;top:-4px">_</span>sites = WeakSet()</div>
<div class="n" style="left:690.8px;top:261.00px;color:#4b5059">27</div>
<div class="n" style="left:690.8px;top:300.00px;color:#4b5059">28</div>
<div class="n" style="left:690.8px;top:338.00px;color:#4b5059">29</div>
<div class="c" style="left:838.0px;top:337.00px;"><span style="position:static;color:#cf8e6d">class</span> AdminSite:<span style="position:static;color:#868a91">...</span></div>
<svg style="left:808.7px;top:341.1px;" width="28" height="28" viewBox="0 0 16 16"><path d="M6 4.5L9.5 8L6 11.5" fill="none" stroke="#868a91" stroke-width="1.05" stroke-linecap="round" stroke-linejoin="round"/></svg>
<div class="n" style="left:690.8px;top:377.00px;color:#4b5059">597</div>
<div class="n" style="left:690.8px;top:415.00px;color:#4b5059">598</div>
<div class="n" style="left:690.8px;top:454.00px;color:#4b5059">599</div>
<div class="c" style="left:838.0px;top:453.00px;"><span style="position:static;color:#cf8e6d">class</span> DefaultAdminSite(LazyObject):<span style="position:static;color:#868a91">...</span></div>
<svg style="left:808.7px;top:456.6px;" width="28" height="28" viewBox="0 0 16 16"><path d="M6 4.5L9.5 8L6 11.5" fill="none" stroke="#868a91" stroke-width="1.05" stroke-linecap="round" stroke-linejoin="round"/></svg>
<div class="n" style="left:690.8px;top:492.00px;color:#4b5059">606</div>
<div class="n" style="left:690.8px;top:531.00px;color:#4b5059">607</div>
<div class="n" style="left:690.8px;top:569.00px;color:#4b5059">608</div>
<div class="c" style="left:838.0px;top:568.00px;"><span style="position:static;color:#7a7e85"># This global object represents the default admin site, for the common case.</span></div>
<div class="n" style="left:690.8px;top:608.00px;color:#4b5059">609</div>
<div class="c" style="left:838.0px;top:607.00px;"><span style="position:static;color:#7a7e85"># You can provide your own AdminSite using the (Simple)AdminConfig.default<span style="position:relative;top:-4px">_</span>site</span></div>
<div class="n" style="left:690.8px;top:646.00px;color:#4b5059">610</div>
<div class="c" style="left:838.0px;top:645.00px;"><span style="position:static;color:#7a7e85"># attribute. You can also instantiate AdminSite in your own code to create a</span></div>
<div class="n" style="left:690.8px;top:685.00px;color:#4b5059">611</div>
<div class="c" style="left:838.0px;top:684.00px;"><span style="position:static;color:#7a7e85"># custom admin site.</span></div>
<div class="n" style="left:690.8px;top:723.00px;color:#a1a3ab">612</div>
<div class="c" style="left:838.0px;top:722.00px;">site = DefaultAdminSite()</div>
<div class="n" style="left:690.8px;top:762.00px;color:#4b5059">613</div>
<div style="left:1047.2px;top:725.0px;width:2.6px;height:30.4px;background:#ced0d6;"></div>
<span class="t" style="left:2499.90px;top:160.18px;font-size:24px;line-height:24px;color:#b4b8bf;letter-spacing:-0.550px;">Reader Mode</span>
<div style="left:2674.2px;top:151px;width:1.6px;height:41px;background:#43454a;"></div>
<div style="left:2751.3px;top:151px;width:1.6px;height:41px;background:#43454a;"></div>
<svg style="left:2692.7px;top:160.5px;" width="21.6" height="21.6" viewBox="0 0 21.6 21.6"><circle cx="10.8" cy="10.8" r="9.6" fill="none" stroke="#e03a3a" stroke-width="1.9"/><path d="M3.9 11.4l1.4 -1.6 1.6 1.8 1.6 -1.8 1.6 1.8 1.6 -1.8 1.6 1.8 1.6 -1.8 1.6 1.8 1.3 -1.4" fill="none" stroke="#e03a3a" stroke-width="1.1" stroke-linejoin="round"/></svg>
<span class="t" style="left:2721.90px;top:160.18px;font-size:24px;line-height:24px;color:#6f737a;">5</span>
<svg style="left:2765px;top:161px;" width="24" height="22" viewBox="0 0 24 22"><path d="M3.6 11.6l5.6 5.4 11.6 -12.6" fill="none" stroke="#5fad65" stroke-width="4.2" stroke-linejoin="miter"/><path d="M4.4 12.2l4.8 4.6 10.8 -11.8" fill="none" stroke="#1e1f22" stroke-width="1.4" stroke-linejoin="miter"/></svg>
<div style="left:2786px;top:508px;width:24px;height:3.6px;background:#5f8571;"></div>
<div style="left:2786px;top:777.4px;width:24px;height:3.6px;background:#5f8571;"></div>
<svg style="left:0;top:0" width="2880" height="400" viewBox="0 0 2880 400"><g fill="none" stroke="#ced0d6" stroke-width="2.35" stroke-linecap="round" stroke-linejoin="round"><path d="M2834.4 114.6l3.4 -6.4v-5.6a9.8 9.8 0 0 1 9.8 -9.8a9.8 9.8 0 0 1 9.8 9.8v5.6l3.4 6.4z"/></g><path d="M2843.6 118.6h8a4 3.6 0 0 1 -8 0z" fill="#ced0d6"/><circle cx="2858.8" cy="95.4" r="8" fill="#2b2d30"/><circle cx="2858.8" cy="95.4" r="6.3" fill="#db5c5c"/><g fill="none" stroke="#ced0d6" stroke-width="2.35" stroke-linecap="round" stroke-linejoin="round"><ellipse cx="2847.6" cy="166.4" rx="12.9" ry="4.7"/><path d="M2834.7 166.4v20.2c0 2.6 5.8 4.7 12.9 4.7s12.9 -2.1 12.9 -4.7v-20.2"/><path d="M2834.7 173.2c0 2.6 5.8 4.7 12.9 4.7s12.9 -2.1 12.9 -4.7"/><path d="M2834.7 180c0 2.6 5.8 4.7 12.9 4.7s12.9 -2.1 12.9 -4.7"/></g><circle cx="2847.5" cy="246.4" r="14.9" fill="#ced0d6"/><rect x="2831" y="244.9" width="33" height="3.2" fill="#2b2d30"/><text transform="translate(2847.6,255.2) scale(0.8,1)" text-anchor="middle" font-family="Liberation Sans,sans-serif" font-weight="700" font-size="24.6" fill="#ced0d6" stroke="#2b2d30" stroke-width="4.6" stroke-linejoin="round" paint-order="stroke fill">X</text><rect x="2826" y="289.9" width="41.9" height="1.8" fill="#43454a"/><g fill="none" stroke="#ced0d6" stroke-width="2.35" stroke-linecap="round" stroke-linejoin="round"><path d="M2860.8 327.4h-22.4a4 4 0 0 1 0 -8h22.4"/><path d="M2834.4 323.4v25.6a4 4 0 0 0 4 4h22.4v-25.6"/><path d="M2839 323.4h21.8" stroke-width="1.6"/></g></svg>
<span class="t" style="left:2841.3px;top:330.6px;font-size:18.5px;line-height:18.5px;font-weight:700;color:#ced0d6;">A</span>
<div style="left:2687.7px;top:1748px;width:80.6px;height:51px;background:#2c3854;"></div>
<div style="left:2768.3px;top:1748px;width:21px;height:51px;background:#202225;"></div>
<div style="left:25px;top:1768px;width:14px;height:14px;background:#25324d;box-sizing:border-box;border:2px solid #548af7;border-radius:3.5px;"></div>
<span class="t" style="left:46.60px;top:1762.98px;font-size:24px;line-height:24px;color:#a4a7ae;letter-spacing:0.600px;">drf</span>
<span class="t" style="left:120.00px;top:1762.98px;font-size:24px;line-height:24px;color:#a4a7ae;transform:scaleX(0.9329);transform-origin:0 0;">.venv</span>
<span class="t" style="left:218.00px;top:1762.98px;font-size:24px;line-height:24px;color:#a4a7ae;transform:scaleX(0.9173);transform-origin:0 0;">Lib</span>
<span class="t" style="left:291.40px;top:1762.98px;font-size:24px;line-height:24px;color:#a4a7ae;letter-spacing:-0.492px;">site-packages</span>
<span class="t" style="left:476.40px;top:1762.98px;font-size:24px;line-height:24px;color:#a4a7ae;letter-spacing:0.230px;">django</span>
<span class="t" style="left:593.30px;top:1762.98px;font-size:24px;line-height:24px;color:#a4a7ae;letter-spacing:0.408px;">contrib</span>
<span class="t" style="left:711.50px;top:1762.98px;font-size:24px;line-height:24px;color:#a4a7ae;letter-spacing:0.063px;">admin</span>
<span class="t" style="left:856.50px;top:1762.98px;font-size:24px;line-height:24px;color:#a4a7ae;transform:scaleX(0.9318);transform-origin:0 0;">sites.py</span>
<svg style="left:84.575px;top:1759.2px;" width="28" height="28" viewBox="0 0 16 16"><path d="M6 4.5L9.5 8L6 11.5" fill="none" stroke="#868a91" stroke-width="1.05" stroke-linecap="round" stroke-linejoin="round"/></svg>
<svg style="left:182.375px;top:1759.2px;" width="28" height="28" viewBox="0 0 16 16"><path d="M6 4.5L9.5 8L6 11.5" fill="none" stroke="#868a91" stroke-width="1.05" stroke-linecap="round" stroke-linejoin="round"/></svg>
<svg style="left:256.275px;top:1759.2px;" width="28" height="28" viewBox="0 0 16 16"><path d="M6 4.5L9.5 8L6 11.5" fill="none" stroke="#868a91" stroke-width="1.05" stroke-linecap="round" stroke-linejoin="round"/></svg>
<svg style="left:441.375px;top:1759.2px;" width="28" height="28" viewBox="0 0 16 16"><path d="M6 4.5L9.5 8L6 11.5" fill="none" stroke="#868a91" stroke-width="1.05" stroke-linecap="round" stroke-linejoin="round"/></svg>
<svg style="left:557.975px;top:1759.2px;" width="28" height="28" viewBox="0 0 16 16"><path d="M6 4.5L9.5 8L6 11.5" fill="none" stroke="#868a91" stroke-width="1.05" stroke-linecap="round" stroke-linejoin="round"/></svg>
<svg style="left:676.375px;top:1759.2px;" width="28" height="28" viewBox="0 0 16 16"><path d="M6 4.5L9.5 8L6 11.5" fill="none" stroke="#868a91" stroke-width="1.05" stroke-linecap="round" stroke-linejoin="round"/></svg>
<svg style="left:786.675px;top:1759.2px;" width="28" height="28" viewBox="0 0 16 16"><path d="M6 4.5L9.5 8L6 11.5" fill="none" stroke="#868a91" stroke-width="1.05" stroke-linecap="round" stroke-linejoin="round"/></svg>
<svg style="left:823px;top:1761.7px;" width="24.2" height="24.2" viewBox="0 0 24 24"><linearGradient id="pb20" x1="0.1" y1="0" x2="0.85" y2="1"><stop offset="0" stop-color="#4c8dc0"/><stop offset="1" stop-color="#2f6797"/></linearGradient><linearGradient id="py20" x1="0.8" y1="0.85" x2="0.2" y2="0"><stop offset="0" stop-color="#ffe052"/><stop offset="1" stop-color="#f4c01e"/></linearGradient><path fill="url(#pb20)" d="M14.25.18l.9.2.73.26.59.3.45.32.34.34.25.34.16.33.1.3.04.26.02.2-.01.13V8.5l-.05.63-.13.55-.21.46-.26.38-.3.31-.33.25-.35.19-.35.14-.33.1-.3.07-.26.04-.21.02H8.77l-.69.05-.59.14-.5.22-.41.27-.33.32-.27.35-.2.36-.15.37-.1.35-.07.32-.04.27-.02.21v3.06H3.17l-.21-.03-.28-.07-.32-.12-.35-.18-.36-.26-.36-.36-.35-.46-.32-.59-.28-.73-.21-.88-.14-1.05-.05-1.23.06-1.22.16-1.04.24-.87.32-.71.36-.57.4-.44.42-.33.42-.24.4-.16.36-.1.32-.05.24-.01h.16l.06.01h8.16v-.83H6.18l-.01-2.75-.02-.37.05-.34.11-.31.17-.28.25-.26.31-.23.38-.2.44-.18.51-.15.58-.12.64-.1.71-.06.77-.04.84-.02 1.27.05zm-6.3 1.98l-.23.33-.08.41.08.41.23.34.33.22.41.09.41-.09.33-.22.23-.34.08-.41-.08-.41-.23-.33-.33-.22-.41-.09-.41.09z"/><path fill="url(#py20)" d="M21.04 6.11l.28.06.32.12.35.18.36.27.36.35.35.47.32.59.28.73.21.88.14 1.04.05 1.23-.06 1.23-.16 1.04-.24.86-.32.71-.36.57-.4.45-.42.33-.42.24-.4.16-.36.09-.32.05-.24.02-.16-.01h-8.22v.82h5.84l.01 2.76.02.36-.05.34-.11.31-.17.29-.25.25-.31.24-.38.2-.44.17-.51.15-.58.13-.64.09-.71.07-.77.04-.84.01-1.27-.04-1.07-.14-.9-.2-.73-.25-.59-.3-.45-.33-.34-.34-.25-.34-.16-.33-.1-.3-.04-.25-.02-.2.01-.13v-5.34l.05-.64.13-.54.21-.46.26-.38.3-.32.33-.24.35-.2.35-.14.33-.1.3-.06.26-.04.21-.02.13-.01h5.84l.69-.05.59-.14.5-.21.41-.28.33-.32.27-.35.2-.36.15-.36.1-.35.07-.32.04-.28.02-.21V6.07h2.09l.14.01zm-6.47 14.25l-.23.33-.08.41.08.41.23.33.33.23.41.08.41-.08.33-.23.23-.33.08-.41-.08-.41-.23-.33-.33-.23-.41-.08-.41.08z"/></svg>
<span class="t" style="left:2027.50px;top:1762.98px;font-size:24px;line-height:24px;color:#a4a7ae;transform:scaleX(0.9414);transform-origin:0 0;">612:16</span>
<span class="t" style="left:2182.30px;top:1762.98px;font-size:24px;line-height:24px;color:#a4a7ae;transform:scaleX(0.7321);transform-origin:0 0;">LF</span>
<span class="t" style="left:2231.80px;top:1762.98px;font-size:24px;line-height:24px;color:#a4a7ae;transform:scaleX(0.9191);transform-origin:0 0;">UTF-8</span>
<span class="t" style="left:2324.20px;top:1762.98px;font-size:24px;line-height:24px;color:#a4a7ae;transform:scaleX(0.9193);transform-origin:0 0;">4 spaces</span>
<span class="t" style="left:2441.50px;top:1762.98px;font-size:24px;line-height:24px;color:#a4a7ae;letter-spacing:-0.050px;">Python 3.11 (drf)</span>
<span class="t" style="left:2696.60px;top:1762.98px;font-size:24px;line-height:24px;color:#a4a7ae;letter-spacing:-0.071px;">1544 of 3400M</span>
<div style="left:2126.5px;top:1763.0px;width:11.7px;height:11.7px;background:#f25022;"></div>
<div style="left:2139.8px;top:1763.0px;width:11.7px;height:11.7px;background:#7fba00;"></div>
<div style="left:2126.5px;top:1776.2px;width:11.7px;height:11.7px;background:#00a4ef;"></div>
<div style="left:2139.8px;top:1776.2px;width:11.7px;height:11.7px;background:#ffb900;"></div>
<svg style="left:2650px;top:1762px;" width="26" height="26" viewBox="0 0 26 26"><g fill="none" stroke="#ced0d6" stroke-width="2.1" stroke-linecap="round" stroke-linejoin="round"><rect x="2.4" y="11.2" width="15.4" height="11.6" rx="2.4"/><path d="M13.2 11v-3.2a4.6 4.6 0 0 1 9.2 0v2.4"/><path d="M10.1 15.4v3.4"/></g></svg>
</div></body></html>
